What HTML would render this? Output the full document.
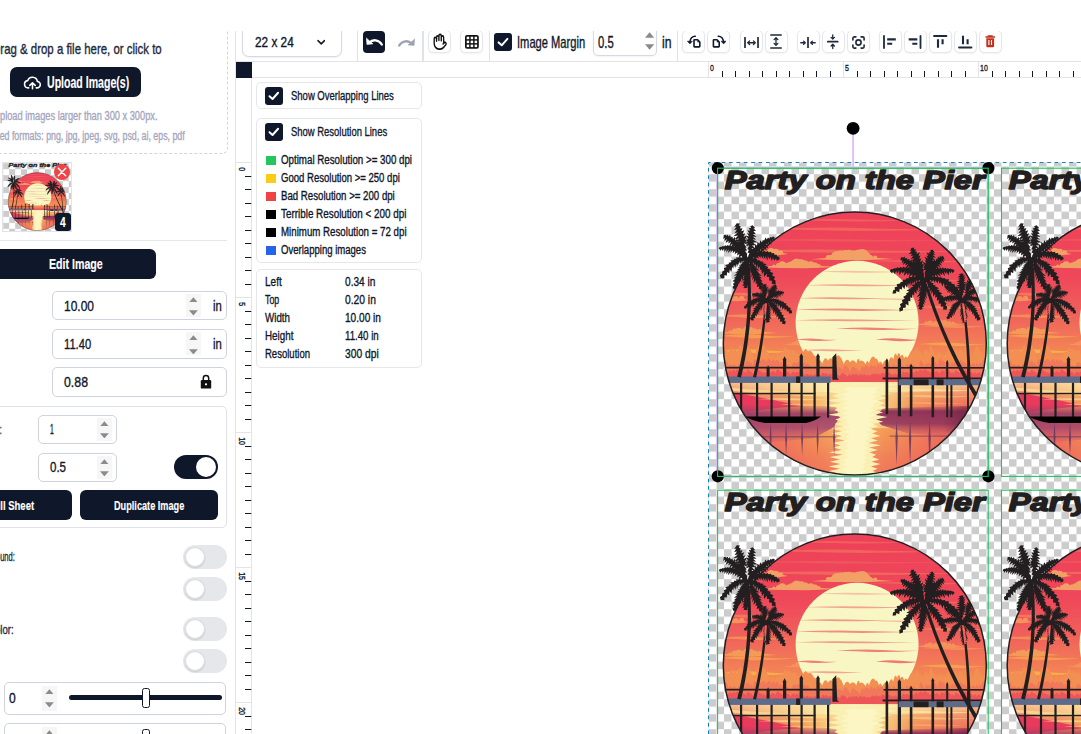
<!DOCTYPE html>
<html lang="en"><head><meta charset="utf-8"><title>Gang Sheet Builder</title><style>
html,body{margin:0;padding:0}
body{width:1081px;height:734px;overflow:hidden;position:relative;background:#fff;font-family:"Liberation Sans",sans-serif}
#app{position:absolute;left:0;top:0;width:1081px;height:734px;overflow:hidden}
#app div,#app svg,#app span{position:absolute}
.t{white-space:pre;line-height:1;display:block;-webkit-text-stroke:0.35px currentColor}
.b{-webkit-text-stroke:0.15px currentColor}
</style></head>
<body><div id="app">
<svg style="left:0;top:0" width="1081" height="734" viewBox="0 0 1081 734"><defs><pattern id="chk" x="709" y="159.2" width="15" height="15" patternUnits="userSpaceOnUse"><rect width="15" height="15" fill="#fff"/><rect width="7.5" height="7.5" fill="#ccc"/><rect x="7.5" y="7.5" width="7.5" height="7.5" fill="#ccc"/></pattern><pattern id="chk2" x="-17" y="2" width="54" height="54" patternUnits="userSpaceOnUse"><rect width="54" height="54" fill="#fff"/><rect width="27" height="27" fill="#ccc"/><rect x="27" y="27" width="27" height="27" fill="#ccc"/></pattern><g id="art"><defs><clipPath id="cc"><circle cx="137.2" cy="175.4" r="131.6"/></clipPath><clipPath id="sunc"><circle cx="139.5" cy="154" r="61.5"/></clipPath><linearGradient id="sky" x1="0" y1="0" x2="0" y2="1"><stop offset="0" stop-color="#ee4059"/><stop offset="0.40" stop-color="#ef485a"/><stop offset="0.62" stop-color="#f0645b"/><stop offset="0.82" stop-color="#f38654"/><stop offset="1" stop-color="#f6a24c"/></linearGradient><linearGradient id="wh" x1="0" y1="0" x2="1" y2="0"><stop offset="0.04" stop-color="#ea4a5c"/><stop offset="0.22" stop-color="#f0785a"/><stop offset="0.38" stop-color="#f6a453"/><stop offset="0.5" stop-color="#f9c877"/><stop offset="0.62" stop-color="#f6a453"/><stop offset="0.78" stop-color="#f07a5a"/><stop offset="0.96" stop-color="#e9585c"/></linearGradient><linearGradient id="wv" x1="0" y1="0" x2="0" y2="1"><stop offset="0" stop-color="#fbe39a" stop-opacity=".75"/><stop offset="0.22" stop-color="#f7b060" stop-opacity=".25"/><stop offset="0.45" stop-color="#ee685c" stop-opacity=".12"/><stop offset="0.75" stop-color="#ec5e5c" stop-opacity=".5"/><stop offset="1" stop-color="#ea505c" stop-opacity=".6"/></linearGradient><linearGradient id="glow" x1="0" y1="0" x2="1" y2="0"><stop offset="0" stop-color="#fbeeb0" stop-opacity="0"/><stop offset="0.3" stop-color="#fbeeb0" stop-opacity=".55"/><stop offset="0.5" stop-color="#fbf3bb"/><stop offset="0.7" stop-color="#fbeeb0" stop-opacity=".55"/><stop offset="1" stop-color="#fbeeb0" stop-opacity="0"/></linearGradient><linearGradient id="purp" x1="0" y1="0" x2="0" y2="1"><stop offset="0" stop-color="#a04468" stop-opacity=".0"/><stop offset="0.22" stop-color="#9a3f66" stop-opacity=".95"/><stop offset="0.55" stop-color="#a8486c" stop-opacity=".9"/><stop offset="1" stop-color="#d05868" stop-opacity="0"/></linearGradient><linearGradient id="purpR" x1="0" y1="0" x2="0" y2="1"><stop offset="0" stop-color="#8a3058" stop-opacity="0"/><stop offset="0.18" stop-color="#8a3058" stop-opacity=".95"/><stop offset="0.55" stop-color="#94365c" stop-opacity=".9"/><stop offset="1" stop-color="#d05866" stop-opacity="0"/></linearGradient><linearGradient id="darkR" x1="0" y1="0" x2="1" y2="0"><stop offset="0.5" stop-color="#5a1838" stop-opacity="0"/><stop offset="1" stop-color="#5a1838" stop-opacity=".85"/></linearGradient></defs><g clip-path="url(#cc)"><rect x="0" y="40" width="270" height="176" fill="url(#sky)"/><path fill="#f0605b" d="M70.0 52.0Q109.0 50.2 141.5 51.3T200.0 52.0Q148.0 53.8 115.5 52.9T70.0 52.0Z"/><path fill="#f0645b" d="M45.0 61.0Q102.0 58.4 149.5 60.0T235.0 61.0Q159.0 63.6 111.5 62.3T45.0 61.0Z"/><path fill="#ef585b" d="M25.0 72.0Q89.5 70.0 143.2 71.2T240.0 72.0Q154.0 74.0 100.2 73.0T25.0 72.0Z"/><path fill="#f0685c" d="M12.0 83.0Q87.0 80.4 149.5 82.0T262.0 83.0Q162.0 85.6 99.5 84.3T12.0 83.0Z"/><path fill="#f0625c" d="M150.0 93.0Q183.0 91.2 210.5 92.3T260.0 93.0Q216.0 94.8 188.5 93.9T150.0 93.0Z"/><path fill="#f0685c" d="M2.0 104.0Q17.0 102.0 29.5 103.2T52.0 104.0Q32.0 106.0 19.5 105.0T2.0 104.0Z"/><path fill="#f0665a" d="M170.0 112.0Q198.5 109.8 222.2 111.1T265.0 112.0Q227.0 114.2 203.2 113.1T170.0 112.0Z"/><path fill="#f2785a" d="M2.0 126.0Q21.2 123.6 37.2 125.0T66.0 126.0Q40.4 128.4 24.4 127.2T2.0 126.0Z"/><path fill="#f3805a" d="M200.0 139.0Q221.0 136.5 238.5 138.0T270.0 139.0Q242.0 141.5 224.5 140.2T200.0 139.0Z"/><path fill="#f58e56" d="M0.0 148.0Q22.2 145.4 40.7 147.0T74.0 148.0Q44.4 150.6 25.9 149.3T0.0 148.0Z"/><path fill="#f58e56" d="M203.0 158.0Q223.1 155.4 239.8 157.0T270.0 158.0Q243.2 160.6 226.4 159.3T203.0 158.0Z"/><path fill="#f69c50" d="M0.0 168.0Q23.4 165.0 42.9 166.8T78.0 168.0Q46.8 171.0 27.3 169.5T0.0 168.0Z"/><path fill="#f6a050" d="M200.0 176.0Q221.0 173.2 238.5 174.9T270.0 176.0Q242.0 178.8 224.5 177.4T200.0 176.0Z"/><path fill="#f8ad4c" d="M0.0 183.0Q24.0 180.0 44.0 181.8T80.0 183.0Q48.0 186.0 28.0 184.5T0.0 183.0Z"/><path fill="#f7a24e" d="M197.0 189.0Q219.5 186.0 238.2 187.8T272.0 189.0Q242.0 192.0 223.2 190.5T197.0 189.0Z"/><clipPath id="cl1"><rect x="39.8" y="71.1" width="34.2" height="15.2"/></clipPath><g fill="#f3a066"><g clip-path="url(#cl1)"><circle cx="49.8" cy="84.7" r="1.9"/><circle cx="53.4" cy="83.7" r="3.9"/><circle cx="58.2" cy="84.0" r="3.4"/><circle cx="63.2" cy="84.4" r="2.4"/></g><path d="M42.0 86.1L48.8 84.3L63.2 84.3L70.4 85.9L59.6 87.1L51.5 86.8Z"/></g><clipPath id="cl2"><rect x="87.2" y="64.9" width="98.8" height="26.4"/></clipPath><g fill="#f3a066"><g clip-path="url(#cl2)"><circle cx="110.8" cy="89.3" r="2.6"/><circle cx="113.9" cy="89.3" r="2.7"/><circle cx="119.2" cy="88.1" r="5.4"/><circle cx="122.9" cy="87.9" r="5.7"/><circle cx="127.7" cy="87.8" r="6.0"/><circle cx="131.3" cy="87.7" r="6.1"/><circle cx="136.0" cy="88.0" r="5.6"/><circle cx="141.2" cy="87.6" r="6.4"/><circle cx="144.9" cy="87.5" r="6.6"/><circle cx="148.8" cy="88.5" r="4.4"/><circle cx="152.8" cy="89.3" r="2.6"/><circle cx="157.6" cy="89.5" r="2.1"/></g><path d="M93.4 91.1L113.2 89.3L154.8 89.3L175.6 90.9L144.4 92.1L121.0 91.8Z"/></g><clipPath id="cl3"><rect x="34.0" y="80.1" width="95.0" height="19.2"/></clipPath><g fill="#f3a066"><g clip-path="url(#cl3)"><circle cx="56.3" cy="97.8" r="1.6"/><circle cx="61.0" cy="97.3" r="2.6"/><circle cx="64.7" cy="96.8" r="3.8"/><circle cx="70.4" cy="97.2" r="2.9"/><circle cx="74.1" cy="96.8" r="3.7"/><circle cx="79.0" cy="96.0" r="5.6"/><circle cx="83.5" cy="96.2" r="5.1"/><circle cx="87.6" cy="96.5" r="4.3"/><circle cx="93.2" cy="96.8" r="3.8"/><circle cx="97.5" cy="97.2" r="2.9"/><circle cx="101.1" cy="97.6" r="1.9"/></g><path d="M40.0 99.1L59.0 97.3L99.0 97.3L119.0 98.9L89.0 100.1L66.5 99.8Z"/></g><clipPath id="cl4"><rect x="-2.0" y="117.1" width="38.0" height="15.2"/></clipPath><g fill="#f4935c"><g clip-path="url(#cl4)"><circle cx="7.9" cy="130.6" r="2.0"/><circle cx="13.0" cy="130.0" r="3.2"/><circle cx="18.4" cy="130.3" r="2.6"/><circle cx="24.0" cy="130.3" r="2.7"/></g><path d="M0.4 132.1L8.0 130.3L24.0 130.3L32.0 131.9L20.0 133.1L11.0 132.8Z"/></g><clipPath id="cl5"><rect x="-5.2" y="150.9" width="72.2" height="14.4"/></clipPath><g fill="#f59b5a"><g clip-path="url(#cl5)"><circle cx="12.5" cy="163.8" r="1.7"/><circle cx="17.0" cy="163.2" r="2.8"/><circle cx="21.2" cy="163.0" r="3.4"/><circle cx="24.7" cy="163.4" r="2.5"/><circle cx="29.2" cy="162.6" r="4.2"/><circle cx="32.6" cy="162.7" r="4.0"/><circle cx="37.1" cy="163.2" r="2.9"/><circle cx="41.8" cy="163.4" r="2.5"/><circle cx="45.5" cy="163.9" r="1.3"/></g><path d="M-0.6 165.1L13.8 163.3L44.2 163.3L59.4 164.9L36.6 166.1L19.5 165.8Z"/></g><clipPath id="cl6"><rect x="193.2" y="143.2" width="60.8" height="13.6"/></clipPath><g fill="#f4935c"><g clip-path="url(#cl6)"><circle cx="208.8" cy="155.2" r="1.9"/><circle cx="212.5" cy="154.8" r="2.6"/><circle cx="217.7" cy="155.0" r="2.3"/><circle cx="222.4" cy="154.6" r="3.2"/><circle cx="227.0" cy="154.7" r="2.9"/><circle cx="231.6" cy="155.0" r="2.3"/><circle cx="235.6" cy="155.2" r="1.8"/></g><path d="M197.0 156.6L209.2 154.8L234.8 154.8L247.6 156.4L228.4 157.6L214.0 157.3Z"/></g><clipPath id="cl7"><rect x="62.0" y="164.0" width="57.0" height="12.8"/></clipPath><g fill="#f4935c"><g clip-path="url(#cl7)"><circle cx="75.6" cy="175.3" r="1.5"/><circle cx="79.8" cy="174.8" r="2.7"/><circle cx="84.5" cy="174.7" r="3.0"/><circle cx="89.0" cy="174.9" r="2.3"/><circle cx="93.2" cy="175.0" r="2.2"/><circle cx="97.0" cy="175.1" r="1.9"/><circle cx="102.3" cy="175.3" r="1.6"/></g><path d="M65.6 176.6L77.0 174.8L101.0 174.8L113.0 176.4L95.0 177.6L81.5 177.3Z"/></g><circle cx="139.5" cy="154" r="61.5" fill="#f8f7c3"/><g clip-path="url(#sunc)"><path fill="#f6c3a4" d="M100.0 103.5Q125.5 102.1 146.8 102.9T185.0 103.5Q151.0 104.9 129.8 104.2T100.0 103.5Z"/><path fill="#f3a592" d="M86.0 117.0Q119.6 115.4 147.6 116.4T198.0 117.0Q153.2 118.6 125.2 117.8T86.0 117.0Z"/><path fill="#f29a8a" d="M80.0 130.0Q108.5 128.4 132.2 129.4T175.0 130.0Q137.0 131.6 113.2 130.8T80.0 130.0Z"/><path fill="#f5b9a0" d="M160.0 131.0Q174.4 129.8 186.4 130.5T208.0 131.0Q188.8 132.2 176.8 131.6T160.0 131.0Z"/><path fill="#f18e84" d="M77.0 141.5Q114.8 139.7 146.3 140.8T203.0 141.5Q152.6 143.3 121.1 142.4T77.0 141.5Z"/><path fill="#f29a8a" d="M77.0 152.0Q113.6 150.5 144.1 151.4T199.0 152.0Q150.2 153.5 119.7 152.8T77.0 152.0Z"/><path fill="#f0807a" d="M118.0 160.5Q143.8 158.5 165.3 159.7T204.0 160.5Q169.6 162.5 148.1 161.5T118.0 160.5Z"/><path fill="#f0807a" d="M78.0 171.5Q90.6 169.5 101.1 170.7T120.0 171.5Q103.2 173.5 92.7 172.5T78.0 171.5Z"/><path fill="#ef7876" d="M158.0 171.5Q171.8 169.3 183.3 170.6T204.0 171.5Q185.6 173.7 174.1 172.6T158.0 171.5Z"/><path fill="#f3a592" d="M84.0 182.0Q102.6 180.5 118.1 181.4T146.0 182.0Q121.2 183.5 105.7 182.8T84.0 182.0Z"/></g><path fill="#f38f52" d="M0 214.5L0 183.3Q2.3 176.1 4.7 183.5Q7.8 177.5 11.0 184.8Q13.4 175.6 15.9 183.1Q17.7 176.8 19.6 184.2Q22.3 172.4 24.9 180.4Q26.6 180.1 28.3 187.0Q30.0 172.2 31.7 180.2Q34.5 184.1 37.2 190.5Q40.5 169.7 43.8 178.1Q46.5 175.2 49.2 182.8Q51.0 184.6 52.8 190.8Q55.3 184.2 57.7 190.5Q59.6 182.0 61.5 188.6Q63.1 179.2 64.7 186.2Q67.0 174.3 69.3 182.0Q71.7 178.0 74.2 185.2Q76.6 178.5 79.0 185.6Q81.4 184.5 83.7 190.8Q87.0 175.8 90.3 183.3Q93.3 180.6 96.4 187.4Q98.5 187.4 100.5 193.3Q102.6 189.9 104.6 195.4Q107.5 186.5 110.4 192.5Q113.5 187.4 116.5 193.2Q119.7 183.0 122.9 189.4Q124.5 190.6 126.0 196.0Q129.2 188.2 132.3 194.0Q135.6 189.6 138.8 195.2Q140.5 187.2 142.2 193.1Q145.1 190.6 148.0 196.0Q149.7 189.4 151.4 195.0Q154.6 184.2 157.8 190.5Q159.6 189.3 161.3 194.9Q163.1 191.1 164.8 196.4Q167.7 189.2 170.7 194.8Q173.2 185.3 175.7 191.4Q177.6 181.1 179.5 187.9Q181.2 181.7 183.0 188.3Q184.8 184.0 186.5 190.3Q188.4 185.5 190.3 191.6Q193.6 177.6 196.8 184.8Q198.9 175.5 201.0 183.0Q202.9 181.7 204.8 188.4Q207.8 177.4 210.9 184.7Q212.6 171.4 214.3 179.5Q216.2 181.8 218.1 188.4Q221.0 180.0 223.9 186.9Q226.0 183.7 228.1 190.0Q229.8 175.7 231.5 183.2Q233.4 175.4 235.4 183.0Q237.6 177.7 239.8 184.9Q243.0 177.3 246.2 184.5Q248.8 171.3 251.3 179.4Q253.2 182.4 255.1 189.0Q258.2 172.0 261.4 180.1Q263.3 181.8 265.3 188.5Q267.7 170.1 270.0 178.4L270 214.5Z"/><path fill="#f1785a" d="M0 214.5L0 195.3Q1.7 188.7 3.4 194.4Q5.8 187.1 8.2 193.0Q9.8 193.1 11.4 198.1Q13.0 193.1 14.5 198.2Q17.0 194.0 19.4 199.0Q21.5 193.2 23.7 198.3Q25.5 191.2 27.2 196.5Q29.8 189.5 32.4 195.0Q33.8 192.7 35.2 197.8Q36.7 186.9 38.3 192.9Q40.8 187.6 43.4 193.4Q46.0 188.2 48.6 193.9Q51.3 188.0 54.1 193.8Q55.8 187.9 57.5 193.7Q59.6 189.1 61.7 194.7Q63.9 192.4 66.1 197.6Q67.9 192.7 69.8 197.8Q71.6 195.7 73.4 200.4Q76.0 190.2 78.6 195.6Q81.4 191.6 84.2 196.8Q86.4 191.5 88.6 196.8Q90.1 192.4 91.7 197.6Q93.7 196.7 95.7 201.3Q97.3 194.3 98.9 199.2Q100.7 195.0 102.4 199.8Q104.6 195.8 106.9 200.5Q108.4 195.4 109.9 200.1Q111.6 197.5 113.3 202.0Q114.9 196.8 116.6 201.4Q118.0 195.0 119.4 199.8Q122.2 197.2 125.0 201.7Q127.4 193.9 129.8 198.9Q131.2 199.5 132.6 203.7Q135.2 195.3 137.7 200.0Q140.0 199.7 142.3 203.9Q144.3 194.8 146.3 199.6Q148.9 194.8 151.6 199.6Q153.3 194.0 154.9 199.0Q156.8 194.7 158.7 199.5Q160.2 192.5 161.8 197.7Q164.0 194.0 166.3 198.9Q167.9 194.4 169.6 199.3Q171.8 194.3 174.0 199.2Q175.9 192.9 177.7 198.0Q179.6 196.0 181.4 200.6Q183.0 192.6 184.6 197.8Q186.1 196.1 187.6 200.7Q189.0 192.4 190.5 197.6Q192.7 193.0 194.8 198.0Q196.2 193.6 197.6 198.6Q199.5 196.3 201.3 200.9Q202.6 188.2 204.0 193.9Q205.5 194.0 207.0 199.0Q208.7 191.2 210.5 196.5Q211.9 192.1 213.4 197.3Q215.3 188.5 217.2 194.2Q218.5 192.8 219.8 197.9Q221.9 186.6 224.0 192.6Q226.1 190.9 228.2 196.3Q230.6 192.5 232.9 197.6Q234.3 190.5 235.7 195.9Q238.4 188.2 241.1 194.0Q242.8 188.7 244.6 194.4Q247.2 192.8 249.8 197.9Q252.0 191.9 254.2 197.1Q255.9 192.5 257.6 197.7Q259.3 191.9 260.9 197.2Q262.3 191.5 263.7 196.8Q265.2 188.0 266.6 193.8Q268.3 195.3 270.0 200.0L270 214.5Z"/><path fill="#ee5559" d="M0 214.5L0 204.1Q1.3 199.3 2.7 203.5Q4.7 198.1 6.8 202.5Q8.4 201.7 9.9 205.5Q12.1 199.6 14.3 203.7Q15.9 199.4 17.5 203.6Q19.3 199.0 21.0 203.2Q22.3 201.8 23.7 205.7Q26.1 201.1 28.5 205.1Q30.1 198.8 31.6 203.1Q33.7 202.2 35.7 206.0Q37.6 199.5 39.6 203.7Q41.0 199.6 42.4 203.8Q43.8 201.2 45.1 205.2Q46.4 201.9 47.7 205.8Q50.3 200.9 52.8 204.9Q55.3 200.7 57.8 204.7Q59.9 198.5 61.9 202.8Q64.0 202.5 66.1 206.3Q68.1 200.1 70.1 204.2Q71.5 203.0 73.0 206.6Q75.4 201.1 77.7 205.0Q79.2 201.6 80.6 205.5Q82.1 200.2 83.6 204.2Q85.5 203.6 87.4 207.2Q89.7 203.8 92.0 207.4Q93.5 204.3 95.1 207.8Q97.3 204.1 99.5 207.6Q101.4 204.4 103.3 207.9Q105.2 202.1 107.0 205.9Q108.9 203.3 110.8 206.9Q112.7 203.6 114.5 207.2Q116.5 205.1 118.5 208.5Q120.4 204.8 122.2 208.2Q124.6 202.4 126.9 206.2Q128.2 205.5 129.5 208.8Q131.6 204.2 133.8 207.7Q135.0 203.6 136.2 207.2Q138.7 204.3 141.2 207.8Q142.8 203.6 144.5 207.2Q147.0 204.5 149.4 207.9Q151.0 204.6 152.6 208.0Q154.7 203.3 156.7 206.9Q158.3 203.4 159.8 207.0Q161.0 203.5 162.3 207.1Q164.8 202.2 167.3 206.0Q168.9 200.4 170.5 204.5Q172.2 203.2 173.8 206.9Q175.1 203.6 176.3 207.1Q177.8 203.0 179.2 206.7Q181.6 202.7 184.0 206.4Q185.5 200.9 187.0 204.8Q189.5 202.1 191.9 205.9Q194.1 201.5 196.4 205.4Q198.3 200.1 200.3 204.2Q202.7 199.1 205.2 203.3Q207.1 198.6 209.0 202.9Q210.7 201.0 212.4 205.0Q214.9 200.2 217.3 204.2Q219.6 201.4 221.8 205.3Q224.3 199.8 226.7 203.9Q228.2 198.1 229.8 202.5Q231.6 201.2 233.4 205.2Q235.0 202.5 236.5 206.2Q238.0 199.4 239.4 203.6Q240.8 201.7 242.2 205.5Q244.0 200.2 245.8 204.2Q247.5 198.9 249.2 203.2Q250.7 201.1 252.3 205.0Q254.0 202.3 255.8 206.1Q257.3 202.2 258.8 206.0Q261.0 202.2 263.2 206.0Q265.3 201.8 267.4 205.7Q268.7 199.6 270.0 203.7L270 214.5Z"/><rect x="0" y="214" width="270" height="100" fill="url(#wh)"/><rect x="0" y="214" width="270" height="100" fill="url(#wv)"/><path fill="url(#glow)" d="M6 214 H268 V219 Q200 225 170 224 L110 224 Q60 224 6 220Z"/><rect x="84" y="214" width="112" height="46" fill="url(#glow)" opacity=".9"/><path fill="#e8345c" opacity=".92" d="M0 222 Q30 226 84 238 Q40 240 0 250Z"/><path fill="#f9dc90" opacity=".85" d="M8 219 Q60 224 112 224 L112 228 Q60 228 12 222Z"/><path fill="#f9d68c" opacity="0.85" d="M40.0 231.0Q62.2 229.4 80.7 230.4T114.0 231.0Q84.4 232.6 65.9 231.8T40.0 231.0Z"/><path fill="#f8c880" opacity="0.75" d="M62.0 236.5Q78.2 235.1 91.7 235.9T116.0 236.5Q94.4 237.9 80.9 237.2T62.0 236.5Z"/><path fill="#f8c67e" opacity="0.8" d="M176.0 228.0Q201.2 226.0 222.2 227.2T260.0 228.0Q226.4 230.0 205.4 229.0T176.0 228.0Z"/><path fill="#f5b070" opacity="0.7" d="M182.0 235.0Q201.8 233.4 218.3 234.4T248.0 235.0Q221.6 236.6 205.1 235.8T182.0 235.0Z"/><path fill="#fbe7a2" opacity="0.8" d="M172.0 222.0Q199.0 220.2 221.5 221.3T262.0 222.0Q226.0 223.8 203.5 222.9T172.0 222.0Z"/><path fill="url(#purp)" d="M0 236 L118 238 L122 249 L116 259 L96 270 L0 279Z"/><path fill="url(#purpR)" d="M270 237 L166 240 L156 249 L164 257 L190 265 L270 271Z"/><rect x="180" y="238" width="90" height="26" fill="url(#darkR)"/><path fill="#fbf0b4" d="M122.9 216.0L106.1 218.3L123.0 220.7L105.4 223.1L121.6 225.4L114.4 227.8L121.7 230.1L107.8 232.4L124.2 234.8L107.1 237.2L121.1 239.5L116.5 241.8L123.7 244.2L109.9 246.6L125.8 248.9L117.5 251.2L124.8 253.6L116.7 255.9L126.5 258.3L114.1 260.6L124.4 263.0L114.1 265.4L124.6 267.7L117.0 270.1L127.0 272.4L114.7 274.8L123.0 277.1L116.4 279.4L124.1 281.8L111.2 284.1L125.2 286.5L112.0 288.9L122.3 291.2L112.2 293.6L122.8 295.9L111.0 298.2L122.3 300.6L111.6 302.9L120.7 305.3L110.9 307.6L121.3 310.0L165.8 310.0L150.8 307.6L163.6 305.3L154.8 302.9L159.9 300.6L153.2 298.2L162.9 295.9L153.7 293.6L161.7 291.2L154.6 288.9L158.5 286.5L151.8 284.1L160.2 281.8L151.7 279.4L163.2 277.1L150.9 274.8L160.1 272.4L153.2 270.1L162.6 267.7L154.6 265.4L159.9 263.0L152.8 260.6L160.3 258.3L155.1 255.9L165.7 253.6L158.4 251.2L169.6 248.9L156.9 246.6L165.5 244.2L157.8 241.8L171.5 239.5L161.3 237.2L168.0 234.8L159.6 232.4L169.7 230.1L161.6 227.8L172.9 225.4L163.6 223.1L180.3 220.7L164.6 218.3L181.0 216.0Z"/><path fill="#fbf6c4" d="M129.9 219.0L127.0 221.3L132.8 223.7L123.6 226.0L130.3 228.4L122.2 230.7L131.3 233.1L124.0 235.4L131.0 237.7L123.4 240.1L132.3 242.4L123.9 244.8L130.4 247.1L123.8 249.4L131.2 251.8L127.2 254.1L132.3 256.5L124.6 258.8L132.7 261.2L126.1 263.5L132.8 265.8L128.6 268.2L131.6 270.5L127.2 272.9L130.6 275.2L127.4 277.6L131.7 279.9L126.3 282.2L130.3 284.6L127.3 286.9L130.5 289.3L125.6 291.6L128.6 293.9L125.0 296.3L128.1 298.6L123.8 301.0L128.9 303.3L124.5 305.7L127.9 308.0L150.2 308.0L143.1 305.7L148.7 303.3L144.1 301.0L148.2 298.6L143.9 296.3L149.7 293.9L146.1 291.6L149.6 289.3L146.5 286.9L150.2 284.6L145.5 282.2L150.6 279.9L146.2 277.6L150.3 275.2L147.1 272.9L151.9 270.5L148.5 268.2L152.9 265.8L147.4 263.5L155.1 261.2L149.5 258.8L156.2 256.5L151.2 254.1L156.6 251.8L151.0 249.4L158.5 247.1L151.9 244.8L156.8 242.4L152.8 240.1L157.1 237.7L154.8 235.4L162.9 233.1L153.6 230.7L160.2 228.4L154.6 226.0L160.7 223.7L157.8 221.3L161.8 219.0Z"/><path fill="#5d3560" opacity=".8" d="M51.9 268.5 L54.1 268.5 L53 287Z"/><path fill="#5d3560" opacity=".8" d="M52.1 268.5 L53.9 268.5 L53 254Z"/><path fill="#5d3560" opacity=".8" d="M67.4 268.5 L69.6 268.5 L68.5 287Z"/><path fill="#5d3560" opacity=".8" d="M67.6 268.5 L69.4 268.5 L68.5 254Z"/><path fill="#5d3560" opacity=".8" d="M83.4 268.5 L85.6 268.5 L84.5 287Z"/><path fill="#5d3560" opacity=".8" d="M83.6 268.5 L85.4 268.5 L84.5 254Z"/><path fill="#5d3560" opacity=".8" d="M98.9 268.5 L101.1 268.5 L100 287Z"/><path fill="#5d3560" opacity=".8" d="M99.1 268.5 L100.9 268.5 L100 254Z"/><path fill="#5d3560" opacity=".8" d="M115.4 268.5 L117.6 268.5 L116.5 287Z"/><path fill="#5d3560" opacity=".8" d="M115.6 268.5 L117.4 268.5 L116.5 254Z"/><path fill="#5a3060" opacity=".8" d="M177.8 268 L180.2 268 L179 297Z"/><path fill="#5a3060" opacity=".8" d="M178.0 268 L180.0 268 L179 252Z"/><path fill="#5a3060" opacity=".8" d="M191.3 268 L193.7 268 L192.5 297Z"/><path fill="#5a3060" opacity=".8" d="M191.5 268 L193.5 268 L192.5 252Z"/><path fill="#5a3060" opacity=".8" d="M210.8 268 L213.2 268 L212 297Z"/><path fill="#5a3060" opacity=".8" d="M211.0 268 L213.0 268 L212 252Z"/><rect x="44" y="267.8" width="74" height="1.5" fill="#5d3560" opacity=".5"/><rect x="172" y="267.2" width="62" height="1.5" fill="#5a3060" opacity=".45"/><g fill="#231f20"><rect x="0" y="198.6" width="118.5" height="1.7"/><path d="M49.0 209 L49.0 200 L50.5 197 L52.0 200 L52.0 209Z"/><path d="M65.4 209 L65.4 191 L67 188 L68.6 191 L68.6 209Z"/><path d="M82.10000000000001 209 L82.10000000000001 188 L83.7 185 L85.3 188 L85.3 209Z"/><path d="M98.80000000000001 209 L98.80000000000001 188 L100.4 185 L102.0 188 L102.0 209Z"/><path d="M114.8 189 L118.6 185 L119.6 210 L121.6 211.6 L114.8 211.6Z"/><rect x="22.4" y="214" width="2.2" height="35.5"/><rect x="38.4" y="214" width="2.2" height="35.5"/><rect x="52.9" y="214" width="2.2" height="35.5"/><rect x="70.4" y="214" width="2.2" height="35.5"/><rect x="82.9" y="214" width="2.2" height="35.5"/><rect x="95.9" y="214" width="2.2" height="35.5"/><rect x="109.4" y="214" width="2.2" height="35.5"/><rect x="12" y="224.6" width="86" height="1.5"/><path d="M27 248.3 L103.5 248.3 Q97 253 88 254.8 L48 254.8 Q36 253 27 248.3Z" fill="#000"/></g><rect x="8" y="208.3" width="105" height="6.4" fill="#5c6b8a"/><rect x="78.5" y="208.3" width="4.2" height="6.4" fill="#231f20"/><g fill="#231f20"><rect x="166" y="198.8" width="104" height="1.6"/><rect x="165" y="209.3" width="105" height="1.9"/><path d="M168.0 246 L168.0 192.5 L169.3 190 L170.60000000000002 192.5 L170.60000000000002 246Z"/><path d="M180.20000000000002 248 L180.20000000000002 191.5 L181.8 189 L183.4 191.5 L183.4 248Z"/><path d="M192.2 248 L192.2 198.0 L193.5 195.5 L194.8 198.0 L194.8 248Z"/><path d="M213.89999999999998 249 L213.89999999999998 190.0 L215.2 187.5 L216.5 190.0 L216.5 249Z"/><path d="M228.6 249 L228.6 194.0 L229.6 191.5 L230.6 194.0 L230.6 249Z"/><path d="M232.8 249 L232.8 212.5 L233.8 210 L234.8 212.5 L234.8 249Z"/><path d="M249.5 247 L249.5 200.5 L250.4 198 L251.3 200.5 L251.3 247Z"/></g><rect x="181" y="211.2" width="89" height="5.8" fill="#5c6b8a"/><rect x="196" y="211.2" width="15" height="5.8" fill="#231f20"/><rect x="219" y="211.2" width="7" height="5.8" fill="#231f20"/><g fill="#231f20"><path d="M207.0 111.6L207.1 108.2L208.0 106.1L206.8 105.0L208.1 101.7L205.6 102.1L206.7 99.2L205.2 99.0L206.7 94.8L204.2 96.2L205.7 91.8L202.6 93.7L203.7 90.2L201.7 90.9L202.9 87.1L200.9 88.2L202.1 83.8L198.8 86.1L199.6 83.4L197.7 83.6L198.3 81.0L196.1 81.4L196.6 79.5L194.0 79.6L192.3 82.9L194.2 82.4L191.1 86.0L194.5 85.2L193.0 88.1L195.9 87.4L192.9 90.9L196.5 90.1L193.3 93.6L197.4 92.8L193.8 96.2L198.3 95.4L196.3 98.5L199.8 97.9L197.3 101.2L200.9 100.6L199.0 103.8L202.2 103.4L200.2 106.6L203.2 106.2L202.7 109.2L204.8 109.0ZM207.0 111.6L205.2 108.1L204.7 105.6L202.4 106.0L201.6 103.8L199.7 103.8L198.5 101.2L196.8 102.0L195.2 99.3L193.7 101.1L192.3 99.3L190.7 100.0L188.8 98.0L187.6 99.7L185.9 98.4L184.5 99.7L183.1 98.8L181.3 99.7L179.9 99.0L178.2 100.3L177.0 99.9L175.0 101.1L174.0 100.8L172.0 102.6L174.5 105.2L175.5 102.9L177.0 105.8L178.6 102.8L179.8 105.2L181.5 102.4L181.6 107.0L184.3 103.2L184.9 105.5L187.1 102.8L186.3 107.8L189.6 104.2L189.5 107.3L192.4 104.5L191.1 109.2L194.8 106.1L194.5 109.3L197.7 107.0L198.2 109.9L200.6 108.3L201.2 111.5L203.4 110.2ZM207.0 111.6L204.8 109.8L203.9 108.7L202.3 109.1L201.1 108.1L199.6 108.8L198.2 108.0L196.9 108.6L194.8 107.8L194.1 109.0L191.4 108.5L191.3 110.1L188.8 110.0L188.3 111.3L185.2 111.5L185.6 113.3L183.0 113.8L182.5 115.3L179.0 116.1L179.8 118.2L177.1 119.1L177.2 121.5L175.4 122.3L175.0 125.6L178.5 125.0L178.7 122.9L181.6 124.0L182.1 120.5L184.2 121.4L184.8 118.0L186.8 121.0L187.9 116.5L189.1 119.6L190.4 114.9L191.3 117.5L192.8 113.4L193.0 118.2L195.3 113.2L194.9 117.1L197.4 112.6L197.2 115.4L199.5 112.0L199.7 114.1L201.8 111.7L202.6 113.3L204.1 111.7ZM207.0 111.6L204.6 111.6L202.6 111.7L202.5 112.8L200.2 113.1L200.1 113.9L196.6 114.8L197.8 115.7L193.9 117.0L195.9 118.2L192.8 119.5L193.2 120.3L188.8 122.4L191.6 123.6L188.4 125.3L189.1 126.6L185.5 128.8L187.2 130.4L184.2 132.2L185.1 134.2L182.3 136.1L183.3 138.7L181.6 139.9L182.0 143.6L185.5 142.1L185.3 139.7L188.2 139.4L188.1 135.9L190.9 137.2L190.8 132.5L192.8 133.3L192.7 129.0L194.7 130.0L194.8 125.9L196.6 127.3L196.8 123.1L198.8 126.0L199.2 121.0L200.4 123.3L200.9 118.8L202.0 121.0L202.7 116.9L203.6 119.9L204.5 115.6L205.0 117.3L206.0 114.1ZM207.0 111.6L205.2 113.3L203.4 115.8L204.9 115.4L203.1 117.9L203.8 117.5L201.2 121.1L203.1 119.7L200.0 124.0L203.3 122.1L200.9 125.6L202.3 124.5L199.0 129.1L202.9 127.2L200.8 130.2L202.5 129.8L200.2 133.0L202.5 132.6L200.7 135.2L201.9 135.4L199.7 138.5L202.1 138.4L200.7 140.5L203.0 141.6L205.1 140.8L204.4 138.7L206.2 138.8L205.2 135.8L207.1 136.6L205.9 133.0L208.0 134.7L206.6 130.3L208.6 132.3L207.1 127.7L209.7 130.8L207.9 125.2L210.0 128.3L208.2 122.8L210.0 125.6L208.4 120.4L209.1 121.8L208.0 118.1L208.9 119.0L208.0 115.9L209.3 117.0L208.3 113.8ZM207.0 111.6L207.4 108.4L207.0 106.2L208.6 105.6L208.2 102.8L209.9 103.0L209.5 99.6L211.3 100.6L211.1 96.8L212.9 98.5L212.9 94.8L214.3 96.3L214.5 92.1L216.1 94.4L216.4 90.5L218.2 93.1L218.6 90.2L219.8 91.3L220.4 88.1L221.7 90.0L222.4 87.3L223.7 89.0L224.3 87.4L226.0 88.6L227.1 92.2L225.1 90.9L226.6 94.3L223.8 92.6L224.7 95.3L222.1 93.9L224.3 97.5L220.9 95.8L223.2 99.3L219.5 97.5L222.0 101.1L218.0 99.3L221.3 103.3L216.8 101.4L219.2 104.8L215.1 103.3L216.1 106.2L213.1 105.1L215.3 108.7L211.8 107.6L211.9 110.3L209.7 109.6ZM207.0 111.6L208.4 108.4L208.9 106.0L210.8 106.4L211.5 104.0L213.2 104.6L214.2 102.2L215.7 103.1L217.0 100.7L218.2 101.9L219.8 99.7L220.9 101.0L222.7 99.0L223.5 100.5L225.3 99.0L226.3 100.5L227.7 99.5L228.9 100.7L230.0 100.1L231.7 100.7L233.1 100.2L234.4 101.4L235.4 101.1L237.0 102.6L235.0 105.1L234.0 103.1L232.8 105.4L231.4 103.0L231.3 107.3L228.9 103.7L228.5 105.9L226.5 103.3L227.4 108.0L224.3 104.4L224.7 107.4L221.9 104.5L223.3 108.9L219.8 105.8L220.4 108.8L217.4 106.4L217.6 109.3L215.0 107.4L215.0 110.3L212.6 108.8L212.2 111.5L210.2 110.4ZM207.0 111.6L209.5 109.8L210.4 108.7L212.4 109.2L213.5 108.3L215.3 108.8L216.6 108.1L218.3 108.7L220.2 108.0L221.4 109.3L223.4 108.8L224.6 110.0L227.3 109.7L227.9 111.1L231.4 111.1L230.9 113.3L233.5 113.6L234.2 115.5L237.0 116.0L237.3 118.2L239.8 118.9L240.3 121.6L241.8 122.1L243.0 125.6L239.2 124.9L239.0 122.9L235.9 123.4L235.4 120.4L232.9 121.1L232.3 118.0L230.0 120.1L229.0 116.2L227.4 119.2L226.0 114.9L224.9 118.3L223.1 113.8L222.2 115.7L220.6 112.3L220.0 115.6L217.9 112.0L217.5 114.7L215.4 111.7L214.7 113.9L212.8 111.6L212.4 114.4L210.3 112.2ZM207.0 111.6L209.3 111.7L211.6 112.1L211.4 112.7L214.6 113.5L213.2 114.4L216.3 115.4L215.1 116.3L218.2 117.5L217.4 118.0L221.6 120.0L219.0 120.7L222.4 122.5L221.0 123.3L224.8 125.4L222.7 126.4L225.9 128.4L224.9 129.5L228.4 131.8L226.4 133.2L228.9 135.0L227.9 137.2L229.6 138.4L229.0 141.6L225.5 141.3L225.7 138.3L223.2 138.6L223.4 134.9L221.1 135.8L221.2 131.6L219.3 132.5L219.4 128.5L217.6 129.8L217.6 125.7L215.5 128.5L215.3 123.4L213.8 126.3L213.6 121.2L212.3 124.4L211.8 119.2L211.0 121.6L210.5 117.2L209.8 118.7L209.2 115.3L208.4 116.6L207.8 113.9ZM207.0 111.6L206.1 108.5L204.7 106.0L206.7 105.8L205.3 103.2L206.6 103.0L204.6 99.2L207.2 100.4L205.1 96.4L207.5 97.7L205.2 93.2L208.7 95.3L206.9 91.7L209.0 92.7L207.0 88.5L210.3 90.4L208.8 87.2L210.7 87.9L208.9 84.0L212.3 85.8L211.3 83.6L213.4 83.6L212.6 81.9L215.0 81.6L217.4 84.5L215.4 84.2L217.5 86.9L215.0 86.6L218.3 89.5L214.9 89.1L217.2 91.7L214.0 91.5L219.3 94.6L214.4 94.2L218.0 96.9L213.5 96.6L215.6 99.1L212.2 98.9L215.2 101.7L211.6 101.5L214.5 104.2L211.0 104.0L213.5 106.8L210.2 106.6L211.6 109.3L209.1 109.2ZM207.0 111.6L206.3 108.0L206.5 105.5L204.4 105.2L204.5 102.7L203.0 102.3L203.0 98.5L200.9 100.0L200.7 96.4L199.1 97.7L198.5 93.8L197.0 95.6L196.2 91.7L194.6 94.2L193.8 91.1L192.3 92.8L191.4 90.5L190.0 91.6L189.1 89.7L187.9 90.3L186.7 88.3L185.4 89.8L184.7 88.7L183.0 89.6L183.2 92.9L184.7 91.5L184.2 95.0L186.5 93.0L185.0 97.0L188.2 94.6L187.5 97.5L190.4 95.5L188.0 100.0L191.9 97.5L189.2 101.8L193.6 99.4L192.0 102.8L195.8 100.8L194.1 104.4L197.7 102.8L197.2 105.8L200.0 104.6L198.8 108.3L201.8 107.1L201.5 110.4L203.9 109.5ZM205.6 112.0L208.9 122.6L212.3 133.0L215.9 143.3L219.8 153.4L223.8 163.4L228.1 173.3L232.5 183.1L237.2 192.8L242.0 202.3L247.1 211.7L252.4 220.9L257.8 230.0L261.2 228.0L255.7 219.0L250.4 209.8L245.3 200.6L240.4 191.2L235.7 181.6L231.2 172.0L226.9 162.2L222.8 152.2L218.9 142.2L215.2 132.0L211.7 121.6L208.4 111.2Z"/><circle cx="207" cy="112.1" r="2.6"/><path d="M245.0 132.0L246.0 129.6L247.3 128.1L246.6 127.3L248.7 124.8L246.6 124.9L248.9 122.3L246.6 122.6L248.8 120.0L246.6 120.4L248.9 117.6L246.8 118.1L249.5 114.9L246.0 115.9L247.8 113.7L245.9 113.7L247.7 111.5L246.0 111.4L248.1 109.0L245.7 109.3L247.5 107.1L245.0 107.1L246.0 105.9L244.0 105.0L240.7 106.9L242.8 107.2L239.8 109.0L242.5 109.4L240.6 111.2L242.9 111.6L238.7 113.3L242.2 113.8L239.3 115.5L242.5 116.0L238.0 117.7L242.0 118.3L238.3 119.9L242.2 120.5L240.2 122.4L243.0 122.8L239.9 124.6L242.9 125.1L240.9 127.0L243.4 127.4L242.1 129.4L243.8 129.7ZM245.0 132.0L245.0 129.2L244.4 127.5L245.7 126.6L245.0 124.5L246.6 124.2L245.8 121.9L247.4 121.9L246.7 119.3L248.3 119.6L247.5 116.7L248.8 117.2L247.8 113.3L249.9 115.2L249.1 111.5L251.2 113.3L250.6 110.2L252.4 111.4L251.9 108.4L253.9 109.8L253.6 107.8L255.2 108.2L255.1 106.7L257.0 107.0L258.3 109.7L256.8 109.2L258.5 111.9L256.1 111.2L258.2 113.9L255.3 113.1L258.0 116.0L254.6 115.1L256.2 117.6L253.3 116.9L255.6 119.7L252.5 119.0L254.7 121.8L251.5 121.1L252.9 123.6L250.3 123.1L251.9 125.8L249.3 125.3L251.8 128.3L248.6 127.8L248.7 130.1L246.9 129.9ZM245.0 132.0L246.4 130.1L247.3 128.6L248.4 129.5L249.3 128.4L250.3 128.7L251.7 127.4L252.4 128.5L253.7 127.6L254.4 128.6L255.4 128.1L256.5 128.7L257.8 128.3L258.7 129.0L260.5 128.6L260.8 129.8L262.5 129.6L263.1 130.5L265.6 130.5L265.3 131.9L267.5 132.1L267.3 133.6L269.0 133.9L269.0 136.0L266.6 137.1L266.2 135.1L264.6 136.9L263.8 134.1L262.7 135.2L261.9 132.8L260.9 135.0L259.8 132.2L259.3 134.8L257.9 131.7L257.9 135.2L256.0 131.6L256.0 133.6L254.3 131.0L254.7 133.9L252.6 131.2L253.1 133.7L251.0 131.3L251.1 133.4L249.2 131.6L249.0 133.4L247.4 132.0ZM245.0 132.0L243.6 130.1L242.9 128.6L241.7 129.0L240.7 127.5L239.7 128.3L238.6 127.0L237.7 127.9L236.6 127.0L235.6 127.7L234.4 127.0L233.5 127.6L232.0 126.9L231.4 128.0L230.0 127.6L229.3 128.6L227.8 128.3L227.0 129.1L224.7 128.9L224.8 130.2L222.7 130.3L222.8 131.9L221.5 132.1L221.0 134.0L223.3 135.6L223.8 133.4L225.3 135.1L226.1 132.5L227.1 133.8L228.0 131.4L228.8 133.8L230.1 131.0L230.2 134.4L232.0 130.9L231.8 134.0L233.8 130.7L233.0 134.2L235.5 130.8L234.7 133.7L237.2 130.8L237.0 132.7L239.0 130.7L238.6 133.1L240.7 131.3L240.4 133.6L242.4 132.1ZM245.0 132.0L243.5 131.6L241.9 131.5L242.3 132.2L240.6 132.4L240.9 132.9L238.7 133.3L239.5 133.9L237.1 134.6L237.7 134.8L234.1 136.2L236.4 136.4L233.0 138.0L235.3 138.3L232.3 139.9L234.1 140.3L231.4 141.9L233.0 142.7L231.0 144.0L231.8 145.1L230.0 146.4L230.4 147.7L228.7 149.0L230.0 151.0L232.3 150.3L232.1 148.6L234.4 149.9L234.2 146.5L235.9 148.1L235.7 144.3L237.3 146.8L237.2 142.3L238.3 144.6L238.4 140.5L239.2 142.3L239.4 138.7L240.4 141.9L240.8 137.6L241.1 139.8L241.6 136.2L241.9 138.3L242.6 135.1L242.7 137.2L243.5 134.3L243.5 136.4L244.5 133.8ZM245.0 132.0L246.6 131.7L248.1 131.6L248.1 132.3L250.0 132.4L249.6 133.1L251.9 133.5L251.4 133.8L254.8 134.8L252.8 135.4L255.7 136.4L254.5 136.8L258.1 138.3L256.0 138.7L259.4 140.3L257.3 140.9L260.1 142.4L258.4 143.4L260.5 144.6L260.0 145.8L262.1 147.2L261.4 148.6L263.1 149.8L262.0 152.0L259.2 152.3L259.3 149.7L257.4 150.6L257.5 147.3L256.1 147.7L256.2 144.8L254.6 146.2L254.5 142.8L253.3 144.0L253.2 140.8L251.8 143.3L251.5 139.3L250.7 141.3L250.3 137.8L249.4 141.3L248.7 136.9L248.6 138.1L248.0 135.3L247.6 137.8L246.7 134.7L246.6 136.2L245.7 133.7ZM245.0 132.0L244.3 129.5L244.4 127.9L243.4 127.2L243.4 124.3L241.7 125.7L241.5 123.5L240.7 123.7L240.2 120.3L238.8 122.6L238.3 120.1L237.4 121.1L236.5 118.2L235.6 120.3L234.7 118.2L234.0 119.2L232.9 117.1L232.2 118.8L231.3 117.5L230.5 118.1L229.5 116.8L228.7 118.0L228.2 117.4L227.0 118.0L227.3 120.4L228.4 119.3L228.0 122.0L229.8 120.2L229.0 122.8L231.1 121.0L229.2 124.7L232.3 122.3L230.9 125.0L233.8 123.0L232.5 125.7L235.2 123.9L232.6 127.5L236.3 125.5L235.5 127.6L238.1 126.2L236.7 129.1L239.4 127.7L238.4 130.3L240.9 129.2L240.3 131.7L242.5 130.9ZM245.0 132.0L245.6 129.4L245.8 127.2L247.2 127.7L247.5 125.4L248.7 126.0L249.2 123.4L250.4 124.6L251.1 122.3L252.1 123.4L253.0 121.2L253.9 122.2L254.9 120.0L255.6 121.2L256.9 118.9L257.4 120.5L258.8 118.5L259.4 120.2L260.4 119.1L261.2 119.9L262.2 119.0L263.1 119.8L263.8 119.2L265.0 120.0L264.5 122.7L263.3 121.2L263.1 123.3L261.7 121.7L262.6 125.2L260.2 122.8L260.8 125.3L258.6 123.3L259.4 126.0L257.0 124.0L257.8 126.6L255.4 124.8L256.5 127.7L253.9 125.9L254.7 128.5L252.3 126.9L253.8 130.0L251.0 128.4L251.4 130.7L249.2 129.6L249.7 132.1L247.6 131.1ZM245.0 132.0L246.4 133.4L247.7 135.4L246.8 134.9L248.4 137.4L247.4 136.5L249.7 139.9L247.8 138.2L250.3 141.9L247.3 140.0L249.0 142.6L247.6 141.8L249.5 144.6L248.0 143.6L250.0 146.7L248.4 145.5L250.7 149.1L248.1 147.6L250.0 150.4L247.7 149.7L249.0 151.5L247.7 151.8L248.7 153.3L247.0 154.0L244.6 154.5L245.5 152.0L244.1 152.8L245.1 149.9L243.2 151.7L244.5 147.9L243.6 149.0L244.7 145.9L242.3 148.5L243.8 144.0L242.5 146.2L243.9 142.1L242.0 144.8L243.5 140.4L242.5 142.2L243.8 138.6L242.7 140.1L243.8 136.9L242.3 138.7L243.5 135.3L243.3 135.8L244.1 133.6ZM243.9 132.2L245.3 141.7L246.5 151.5L247.5 161.5L248.3 171.6L249.0 181.9L249.5 192.4L249.8 203.1L250.0 214.0L253.0 214.0L252.7 203.1L252.3 192.3L251.7 181.8L250.9 171.4L250.0 161.2L248.8 151.2L247.5 141.4L246.1 131.8Z"/><circle cx="245" cy="132.5" r="2.6"/></g></g><circle cx="137.2" cy="175.4" r="131.5" fill="none" stroke="#231f20" stroke-width="1.5"/><g fill="#231f20"><path d="M30.1 91.1L30.7 87.5L31.9 85.0L30.0 84.3L31.3 81.6L29.8 81.0L31.7 77.1L28.5 78.0L30.0 74.8L28.1 74.8L29.9 70.8L27.5 71.7L29.6 67.0L26.0 68.9L27.7 65.1L25.1 65.9L26.7 62.1L23.7 63.1L24.9 60.1L22.3 60.3L23.2 58.1L21.3 57.5L22.2 55.3L19.1 55.1L16.6 58.7L18.8 58.4L16.5 61.7L19.4 61.3L17.0 64.7L20.2 64.3L15.8 68.0L20.4 67.4L17.4 70.7L21.5 70.3L18.2 73.7L22.4 73.3L18.7 76.7L23.2 76.3L19.3 79.8L23.9 79.4L21.3 82.6L25.2 82.3L22.6 85.6L26.3 85.4L25.0 88.5L27.7 88.3ZM30.1 91.1L28.8 88.0L27.1 85.5L29.0 85.1L27.1 82.3L29.5 82.2L27.7 79.6L29.0 79.3L26.2 75.1L30.0 76.5L27.9 73.3L29.9 73.6L27.2 69.6L30.8 70.8L28.6 67.5L31.4 68.0L29.4 65.0L31.8 65.2L29.8 62.2L32.7 62.4L31.1 60.0L33.6 59.7L32.6 58.1L35.1 57.1L37.7 60.0L35.8 60.1L38.5 62.9L35.8 62.9L38.2 65.7L35.4 65.7L38.9 68.5L35.4 68.6L38.5 71.3L35.0 71.4L40.3 74.2L35.4 74.4L38.2 77.0L34.4 77.1L37.0 79.8L33.7 79.9L37.6 82.6L33.7 82.8L36.9 85.5L33.2 85.7L34.5 88.3L32.0 88.4ZM30.1 91.1L28.9 87.5L28.7 84.9L26.7 85.0L26.2 82.2L24.2 83.0L23.6 80.5L21.9 81.1L20.8 78.5L19.4 79.7L18.1 77.4L16.7 78.8L15.4 76.9L14.1 78.0L12.6 76.5L11.5 77.9L10.2 76.9L8.9 77.8L7.6 77.1L6.3 78.2L5.2 77.8L3.6 78.7L2.5 78.5L1.1 80.1L3.1 82.6L4.1 80.5L5.1 82.9L6.6 80.4L6.8 83.8L8.9 80.7L8.7 84.2L11.2 81.0L10.2 85.1L13.3 81.7L12.7 84.6L15.5 82.0L15.0 85.1L17.7 82.8L17.1 86.1L19.9 84.1L19.5 87.2L22.2 85.5L21.0 89.3L24.2 87.6L25.0 90.2L26.9 89.3ZM30.1 91.1L28.2 89.8L27.4 89.0L26.0 89.6L25.1 89.1L23.7 89.4L22.1 88.8L21.2 89.4L18.4 89.0L18.9 90.6L16.3 90.6L16.3 91.7L12.7 92.2L14.0 93.8L11.1 94.6L11.3 95.8L7.6 97.1L9.1 98.7L6.2 100.0L6.9 102.0L4.6 103.2L4.5 105.5L2.3 106.8L3.1 110.1L6.8 110.0L6.8 107.1L9.3 107.3L9.4 103.8L11.7 105.1L12.0 101.1L13.9 103.5L14.5 98.8L15.7 100.3L16.4 96.5L17.7 99.9L18.8 95.2L19.3 99.0L20.8 94.2L20.9 96.7L22.4 92.9L22.3 96.1L24.2 92.5L23.6 95.6L25.9 92.4L25.6 94.3L27.6 92.1ZM30.1 91.1L32.0 88.4L32.5 86.9L34.3 86.3L35.5 84.0L37.1 85.3L38.2 83.6L39.7 84.1L41.4 82.3L42.5 83.9L43.9 82.8L45.3 83.7L46.8 82.9L48.1 83.7L50.2 82.9L51.0 84.1L53.4 83.6L54.0 85.0L56.5 84.8L56.8 86.5L59.0 86.5L59.7 88.3L61.6 88.5L62.1 91.1L59.1 92.6L58.5 90.2L56.5 92.6L55.4 89.2L54.3 92.7L52.6 88.5L51.9 91.3L50.1 87.5L50.2 92.3L47.6 87.7L47.9 91.2L45.3 87.3L45.9 91.0L43.0 87.4L43.2 90.0L40.6 87.4L41.0 90.5L38.3 88.2L38.5 91.1L35.9 89.1L35.6 91.8L33.5 90.4ZM30.1 91.1L32.2 90.4L33.3 89.9L34.5 90.6L35.9 90.2L37.0 90.9L39.5 90.6L39.5 92.0L42.1 92.1L42.3 93.0L46.3 93.7L44.8 94.9L49.1 96.0L47.2 97.4L50.8 98.8L49.6 100.2L53.3 101.8L52.2 103.3L55.8 105.1L54.4 107.0L57.4 108.7L56.3 111.3L57.9 112.3L58.1 116.1L54.2 115.5L54.3 112.6L51.6 112.3L51.6 108.9L49.3 108.8L49.2 105.5L46.4 108.7L46.0 103.3L44.3 106.0L43.7 100.7L42.6 102.0L42.0 98.1L40.7 100.5L39.8 96.4L38.9 99.7L37.6 95.3L37.1 97.4L35.8 93.9L35.4 95.8L34.0 93.0L33.7 95.1L32.1 92.7ZM30.1 91.1L31.3 87.7L31.4 85.8L32.9 84.7L33.1 81.5L35.3 82.4L35.6 79.7L37.1 79.7L37.7 75.9L39.3 77.5L40.1 73.6L41.7 75.6L42.7 72.0L44.4 74.3L45.2 71.8L46.6 72.4L47.9 69.3L49.3 71.3L50.3 69.3L51.8 70.3L52.8 68.7L54.4 69.4L55.2 68.2L57.1 69.1L56.7 72.6L55.1 71.2L54.8 74.1L52.9 72.5L53.9 76.6L50.9 74.3L51.1 77.3L48.5 75.4L50.8 80.3L46.9 77.7L49.2 82.2L44.9 79.5L46.6 83.5L42.6 81.1L43.6 84.6L40.1 82.8L40.8 86.2L37.8 84.8L39.2 88.7L35.9 87.2L35.1 90.0L33.2 89.2ZM30.1 91.1L28.7 93.0L27.3 95.2L28.2 95.1L26.5 97.8L27.9 97.3L26.0 100.3L27.6 99.5L25.5 102.8L26.9 101.8L24.4 105.9L26.7 104.2L24.0 108.5L27.1 106.7L25.1 109.9L26.8 109.2L24.6 112.7L26.9 111.8L25.0 114.8L26.6 114.5L24.6 117.6L27.1 117.2L25.8 119.2L28.1 120.1L30.1 119.4L29.3 117.4L31.3 117.9L30.1 114.7L32.1 115.9L30.6 112.1L32.2 113.3L30.8 109.5L32.8 111.3L31.2 107.0L33.5 109.5L31.7 104.5L34.2 107.7L32.2 102.2L33.5 104.4L31.8 99.8L32.9 101.3L31.6 97.6L32.6 98.6L31.4 95.4L32.6 96.3L31.5 93.3ZM30.1 91.1L29.3 87.4L29.6 85.2L27.6 84.4L27.8 81.7L25.8 81.6L25.9 78.7L24.0 78.9L23.9 75.5L22.4 76.2L22.0 71.8L20.3 74.1L19.7 69.8L18.0 72.3L17.2 68.5L15.5 70.9L14.7 68.3L13.3 69.4L12.4 66.9L11.0 68.3L10.1 66.5L8.6 67.5L7.9 66.5L6.1 67.1L5.7 71.1L7.6 69.4L6.8 72.9L9.4 70.9L8.0 74.8L11.2 72.5L10.7 75.3L13.4 73.6L11.7 77.5L15.1 75.5L12.8 79.7L16.8 77.6L15.8 80.8L19.1 79.2L15.9 83.8L20.4 81.9L20.2 84.8L23.1 83.6L21.3 87.6L24.7 86.4L24.6 89.6L27.0 88.9ZM30.1 91.1L28.1 92.0L26.1 93.1L26.4 93.3L23.1 95.3L25.0 95.1L21.4 97.5L23.7 97.2L20.0 99.8L22.5 99.4L18.8 102.2L21.3 101.8L17.5 104.8L20.0 104.5L16.2 107.6L19.3 107.4L16.2 110.0L18.0 110.4L14.8 113.1L17.3 113.8L15.3 115.7L16.4 117.3L14.9 118.6L16.1 121.1L18.7 120.1L18.4 118.0L20.5 117.9L20.1 114.8L22.0 115.3L21.5 111.8L23.8 113.7L23.2 109.1L25.6 112.5L25.0 106.6L26.0 108.4L25.5 103.8L27.8 107.6L27.3 101.8L28.0 103.7L27.7 99.3L29.0 101.5L28.8 97.2L29.5 98.6L29.4 95.2L30.4 96.7L30.4 93.5ZM30.1 91.1L32.2 91.9L34.5 93.2L33.6 93.5L36.3 95.2L34.7 95.4L37.4 97.2L36.3 97.2L39.8 99.7L37.9 99.3L42.0 102.4L38.4 102.1L41.4 104.4L40.3 104.4L44.4 107.7L41.0 107.4L44.3 110.1L42.1 110.4L45.0 113.0L43.3 113.6L46.1 116.1L43.9 117.2L45.6 118.8L44.1 121.1L41.2 120.6L41.6 118.1L39.2 118.9L39.7 115.0L37.9 115.9L38.5 111.9L35.9 114.7L36.6 109.3L34.6 112.3L35.3 106.6L33.8 109.2L34.3 104.0L32.4 107.6L32.9 101.8L32.3 103.3L32.6 99.2L30.9 102.3L31.2 97.4L30.7 98.5L30.8 95.2L29.9 96.4L29.9 93.4ZM28.7 91.2L29.5 101.0L30.0 110.8L30.2 120.6L30.2 130.4L29.8 140.1L29.2 149.9L28.3 159.7L27.1 169.4L25.7 179.2L23.9 189.0L21.9 198.8L19.6 208.6L23.4 209.4L25.7 199.6L27.6 189.7L29.3 179.8L30.7 169.9L31.8 160.0L32.6 150.1L33.1 140.3L33.4 130.4L33.3 120.5L33.0 110.7L32.4 100.8L31.5 91.0Z"/><circle cx="30.1" cy="91.6" r="2.6"/><path d="M48.5 132.0L49.6 130.5L50.9 128.6L49.9 129.1L51.8 126.5L49.6 127.7L51.4 125.3L49.7 126.4L51.6 123.7L49.3 125.0L51.0 122.6L49.2 123.7L51.0 121.1L49.3 122.3L51.4 119.3L49.2 121.0L51.2 118.0L48.3 119.8L49.7 117.7L48.2 118.4L49.6 116.3L47.8 117.2L48.9 115.5L46.5 116.0L43.4 117.4L45.5 117.5L43.4 118.7L45.6 118.8L43.2 120.0L45.6 120.1L41.5 121.3L45.1 121.5L42.4 122.6L45.5 122.8L41.9 124.0L45.4 124.2L42.6 125.3L45.8 125.5L41.6 126.6L45.5 126.9L42.4 127.9L45.9 128.2L43.3 129.3L46.4 129.5L44.9 130.6L47.0 130.8ZM48.5 132.0L50.4 130.9L51.2 130.2L52.4 130.7L53.3 130.2L54.6 130.7L55.7 130.2L56.8 130.7L58.6 130.2L59.1 131.3L61.1 131.0L61.3 132.2L63.6 132.2L63.7 133.3L66.5 133.5L66.1 134.8L69.1 135.3L68.2 137.0L70.2 137.5L70.7 139.0L73.1 139.8L72.7 141.8L74.2 142.3L74.5 145.0L71.5 145.4L71.2 143.1L69.2 143.3L68.9 140.8L67.0 141.9L66.5 139.0L64.8 141.5L64.0 137.6L62.9 140.5L61.8 136.4L61.1 138.6L59.9 135.0L59.4 137.9L57.9 134.3L57.7 136.9L56.1 133.6L55.9 135.6L54.3 133.0L54.3 135.3L52.6 132.9L52.5 134.9L50.8 133.0ZM48.5 132.0L48.1 130.2L47.9 128.4L47.0 129.0L46.7 127.1L46.2 127.5L45.4 124.7L44.9 126.8L44.0 124.5L43.6 126.2L42.5 124.2L42.3 125.7L41.1 124.0L40.9 125.3L39.8 124.0L39.6 125.1L38.4 124.0L38.3 125.2L37.4 124.6L37.0 125.3L36.3 124.9L35.7 125.3L34.8 125.0L34.5 126.0L34.9 128.5L35.9 126.9L35.4 129.9L37.1 127.4L36.4 129.7L38.1 127.4L37.3 129.6L39.2 127.5L38.1 129.9L40.2 127.9L38.7 130.5L41.1 128.4L39.8 130.7L42.1 128.8L40.4 131.4L43.0 129.5L41.1 132.1L44.0 130.3L42.4 132.5L45.1 131.1L44.2 132.8L46.4 131.8ZM48.5 132.0L47.0 131.7L45.2 131.6L45.5 132.1L43.1 132.4L44.1 132.9L41.3 133.6L42.8 134.1L40.2 135.1L41.3 135.3L37.9 136.7L40.1 137.0L37.2 138.5L38.5 138.7L35.0 140.7L37.6 141.0L35.1 142.6L36.5 143.4L34.5 144.8L35.1 145.9L33.1 147.3L33.9 148.6L32.2 149.9L33.5 152.0L36.2 152.2L36.0 149.7L37.6 149.7L37.4 147.1L39.2 148.3L39.1 144.9L40.7 146.8L40.6 142.8L41.7 144.5L41.7 140.8L42.8 143.0L43.0 139.2L44.1 142.4L44.4 138.0L44.7 140.0L45.2 136.4L45.5 138.0L46.0 135.2L46.4 137.6L47.1 134.5L47.1 136.2L48.0 133.7ZM48.5 132.0L50.3 131.9L52.0 131.8L52.0 132.5L54.3 132.8L53.6 133.7L55.8 134.2L55.6 134.6L59.1 135.7L57.3 136.3L60.7 137.7L58.7 138.5L61.3 139.8L60.5 140.5L63.6 142.2L62.0 143.1L64.5 144.6L63.7 145.7L66.4 147.5L65.2 148.8L67.5 150.3L66.6 152.2L68.2 153.3L67.5 156.0L64.5 155.6L64.7 153.2L62.4 153.5L62.6 150.3L60.6 151.3L60.7 147.5L58.9 149.3L58.9 145.1L57.5 146.7L57.5 142.7L55.8 145.9L55.5 141.0L54.8 142.7L54.5 138.9L53.4 142.1L52.8 137.6L52.2 140.4L51.5 136.3L51.3 137.3L50.6 134.7L50.1 136.1L49.3 133.8ZM48.5 132.0L49.2 129.8L49.4 128.0L50.5 128.3L50.9 126.1L51.9 126.9L52.6 124.7L53.4 125.8L54.3 123.6L55.0 124.9L56.0 122.9L56.5 124.0L57.9 121.8L58.3 123.7L59.4 122.4L59.9 123.2L61.3 121.8L61.6 123.2L62.7 122.4L63.2 123.3L64.1 122.8L64.9 123.5L65.5 123.2L66.5 124.0L65.6 126.1L64.8 124.7L64.9 127.7L63.3 125.4L63.6 127.7L61.9 125.5L63.2 129.2L60.6 126.4L61.7 129.0L59.2 126.5L61.3 130.4L58.1 127.5L60.1 130.7L56.8 128.1L57.4 129.9L55.1 128.3L56.4 131.0L53.8 129.4L54.6 131.5L52.3 130.3L52.8 132.4L50.8 131.4ZM48.5 132.0L47.0 130.8L46.2 129.8L45.2 130.4L44.3 129.7L43.4 130.2L42.3 129.6L41.6 130.1L40.0 129.4L39.6 130.3L37.8 129.9L37.6 130.6L35.0 130.3L35.7 131.6L33.5 131.5L33.8 132.7L31.5 132.8L31.6 133.8L29.0 134.2L29.9 135.7L28.3 136.1L28.0 137.6L26.7 137.9L26.5 140.0L28.9 140.6L29.2 138.8L30.9 140.4L31.5 137.5L32.7 140.1L33.6 136.5L34.4 139.3L35.4 135.5L35.8 139.0L37.3 134.8L37.3 137.4L38.8 133.8L38.8 136.2L40.3 133.1L40.1 136.0L41.9 132.9L41.2 136.1L43.4 133.0L43.0 135.0L44.9 132.7L44.8 134.5L46.4 132.7ZM48.5 132.0L49.6 133.4L50.7 135.0L50.1 135.0L51.4 137.1L50.7 136.5L52.7 139.5L51.3 138.2L53.7 141.9L51.5 139.9L53.9 143.6L51.5 141.8L53.7 145.2L51.5 143.6L53.5 146.8L51.5 145.6L53.5 148.5L51.9 147.5L54.0 150.8L51.2 149.7L52.4 151.5L51.3 151.8L52.4 153.5L50.5 154.0L48.1 154.5L49.0 152.0L47.4 153.0L48.5 149.9L46.5 151.9L47.9 147.9L47.1 149.0L48.2 145.9L46.6 147.5L47.8 144.0L46.0 146.2L47.4 142.1L45.7 144.6L47.1 140.3L45.3 143.1L46.8 138.6L45.4 141.1L46.8 136.9L46.6 137.8L47.5 135.2L46.5 136.2L47.4 133.6ZM48.5 132.0L48.3 129.9L47.8 128.0L48.9 128.3L48.4 125.9L49.5 126.7L48.9 123.8L50.3 125.2L49.9 122.4L50.8 123.7L50.4 120.1L52.0 122.5L51.7 119.6L53.0 121.4L52.9 118.8L53.9 120.2L53.8 117.5L54.8 119.1L54.9 116.6L55.9 118.2L56.0 116.1L56.9 117.3L57.1 115.5L58.5 117.0L59.7 119.3L58.3 118.6L60.4 121.2L57.9 120.0L59.8 122.2L57.2 121.0L60.3 123.8L56.8 122.4L59.3 124.8L55.9 123.4L58.7 125.9L55.1 124.6L56.9 126.6L54.0 125.6L55.9 127.7L53.1 126.9L54.7 128.9L52.2 128.2L54.5 130.5L51.6 129.7L52.7 131.6L50.5 131.0ZM47.4 131.9L46.6 141.4L45.7 150.9L44.5 160.5L43.1 170.1L41.5 179.7L39.7 189.3L37.7 199.0L35.5 208.7L38.5 209.3L40.6 199.6L42.5 189.8L44.2 180.1L45.7 170.4L46.9 160.8L48.0 151.2L48.9 141.6L49.6 132.1Z"/><circle cx="48.5" cy="132.5" r="2.6"/></g><text x="7.2" y="21.0" font-family="'Liberation Sans',sans-serif" font-weight="700" font-style="italic" font-size="25" textLength="260" lengthAdjust="spacingAndGlyphs" fill="#231f20" stroke="#231f20" stroke-width="1.5" stroke-linejoin="round">Party on the Pier</text></g></defs><rect x="708.5" y="162.5" width="380" height="580" fill="url(#chk)"/><path d="M708.5 734V162.5H1081" fill="none" stroke="#0b84c6" stroke-width="1" stroke-dasharray="3.7 3.7"/><use href="#art" x="717.6" y="168.2"/><rect x="717.6" y="168.2" width="270.6" height="308.2" fill="none" stroke="#22c55e" stroke-width="1.1"/><use href="#art" x="1001.5" y="168.2"/><rect x="1001.5" y="168.2" width="270.6" height="308.2" fill="none" stroke="#22c55e" stroke-width="1.1"/><use href="#art" x="717.6" y="490.2"/><rect x="717.6" y="490.2" width="270.6" height="308.2" fill="none" stroke="#22c55e" stroke-width="1.1"/><use href="#art" x="1001.5" y="490.2"/><rect x="1001.5" y="490.2" width="270.6" height="308.2" fill="none" stroke="#22c55e" stroke-width="1.1"/><rect x="716.7" y="167.29999999999998" width="272.40000000000003" height="310.0" fill="none" stroke="#ddb4fb" stroke-width="0.9"/><path d="M853.1 134V167.4" stroke="#e2b5ff" stroke-width="1.7"/><circle cx="853.1" cy="128.3" r="6.4" fill="#000"/><circle cx="717.8000000000001" cy="168.1" r="6.1" fill="#000"/><circle cx="988.4000000000001" cy="168.1" r="6.1" fill="#000"/><circle cx="717.8000000000001" cy="476.29999999999995" r="6.1" fill="#000"/><circle cx="988.4000000000001" cy="476.29999999999995" r="6.1" fill="#000"/><rect x="717.6" y="168.2" width="270.6" height="308.2" fill="none" stroke="#22c55e" stroke-width="1.1"/></svg>
<div style="left:-20px;top:10px;width:246px;height:142px;border:1px dashed #d3d6de;border-radius:6px"></div>
<div style="left:10px;top:67px;width:131px;height:30px;background:#0f172a;border-radius:7px"></div>
<svg style="left:23.3px;top:73px" width="19" height="19" viewBox="0 0 24 24" fill="none" stroke="#fff" stroke-width="2" stroke-linecap="round" stroke-linejoin="round"><path d="M12 12.6v7.2M8.6 15.6l3.4-3.3 3.4 3.3" /><path d="M7.2 18.8h-0.7a4.6 4.6 0 0 1-0.6-9.15 6.3 6.3 0 0 1 12.2 0.9 4.1 4.1 0 0 1-0.7 8.2h-0.7"/></svg>
<div style="left:2px;top:162px;width:70px;height:70px;box-sizing:border-box;border:1px solid #e2e4ea;overflow:hidden;background:#fff"><svg style="left:0;top:0" width="68" height="68" viewBox="-18 0.8 308 308"><rect x="-19" y="0" width="312" height="312" fill="url(#chk2)"/><use href="#art"/></svg></div>
<div style="left:54px;top:164px;width:16px;height:16px;border-radius:8px;background:#ef4444"></div>
<svg style="left:54px;top:164px" width="16" height="16" viewBox="0 0 16 16" ><path d="M4.3 4.3l7.4 7.4M11.7 4.3l-7.4 7.4" stroke="#fff" stroke-width="1.4" stroke-linecap="round"/></svg>
<div style="left:55.4px;top:213px;width:15.6px;height:17.9px;background:#0f172a;border-radius:3px"></div>
<div style="left:-5px;top:240px;width:232px;height:1px;background:#e5e7eb"></div>
<div style="left:-10px;top:249px;width:166px;height:30.3px;background:#0f172a;border-radius:6px"></div>
<div style="left:52.2px;top:291px;width:174.8px;height:29.4px;box-sizing:border-box;border:1px solid #cfd3df;border-radius:5px;background:#fff"></div>
<div style="left:52.2px;top:329.3px;width:174.8px;height:29.4px;box-sizing:border-box;border:1px solid #cfd3df;border-radius:5px;background:#fff"></div>
<div style="left:52.2px;top:367.2px;width:174.8px;height:29.4px;box-sizing:border-box;border:1px solid #cfd3df;border-radius:5px;background:#fff"></div>
<div style="left:186px;top:294px;width:15px;height:23px;background:#f6f6f7"></div><svg style="left:189.2px;top:296.6px" width="8.8" height="5.6" viewBox="0 0 10 6"><path d="M5 0 L10 6 L0 6Z" fill="#8b8b8b"/></svg><svg style="left:189.2px;top:310.4px" width="8.8" height="5.6" viewBox="0 0 10 6"><path d="M0 0 L10 0 L5 6Z" fill="#8b8b8b"/></svg>
<div style="left:186px;top:332.3px;width:15px;height:23px;background:#f6f6f7"></div><svg style="left:189.2px;top:334.9px" width="8.8" height="5.6" viewBox="0 0 10 6"><path d="M5 0 L10 6 L0 6Z" fill="#8b8b8b"/></svg><svg style="left:189.2px;top:348.7px" width="8.8" height="5.6" viewBox="0 0 10 6"><path d="M0 0 L10 0 L5 6Z" fill="#8b8b8b"/></svg>
<svg style="left:200.2px;top:374.3px" width="12" height="15.5" viewBox="0 0 12 15.5" ><path d="M3.3 6.4V4.3a2.7 2.7 0 0 1 5.4 0v2.1" fill="none" stroke="#111" stroke-width="1.5"/><rect x="0.8" y="6" width="10.4" height="8.6" rx="1.2" fill="#111"/><circle cx="6" cy="10.3" r="1.15" fill="#fff"/></svg>
<div style="left:-10px;top:405.5px;width:237px;height:122.7px;box-sizing:border-box;border:1px solid #dfe2ea;border-radius:5px"></div>
<div style="left:37.5px;top:414.5px;width:79.5px;height:29.5px;box-sizing:border-box;border:1px solid #cfd3df;border-radius:5px;background:#fff"></div>
<div style="left:37.5px;top:452.5px;width:79.5px;height:29.5px;box-sizing:border-box;border:1px solid #cfd3df;border-radius:5px;background:#fff"></div>
<div style="left:97px;top:417.5px;width:15px;height:23px;background:#f6f6f7"></div><svg style="left:100.0px;top:420.6px" width="8.8" height="5.6" viewBox="0 0 10 6"><path d="M5 0 L10 6 L0 6Z" fill="#8b8b8b"/></svg><svg style="left:100.0px;top:432.6px" width="8.8" height="5.6" viewBox="0 0 10 6"><path d="M0 0 L10 0 L5 6Z" fill="#8b8b8b"/></svg>
<div style="left:97px;top:455.5px;width:15px;height:23px;background:#f6f6f7"></div><svg style="left:100.0px;top:458.6px" width="8.8" height="5.6" viewBox="0 0 10 6"><path d="M5 0 L10 6 L0 6Z" fill="#8b8b8b"/></svg><svg style="left:100.0px;top:470.6px" width="8.8" height="5.6" viewBox="0 0 10 6"><path d="M0 0 L10 0 L5 6Z" fill="#8b8b8b"/></svg>
<div style="left:174px;top:455px;width:44px;height:24px;border-radius:12px;background:#0f172a"></div><div style="left:196px;top:457px;width:20px;height:20px;border-radius:10px;background:#fff"></div>
<div style="left:-20px;top:490px;width:91.5px;height:30px;background:#0f172a;border-radius:6px"></div>
<div style="left:80px;top:490px;width:138px;height:30px;background:#0f172a;border-radius:6px"></div>
<div style="left:183px;top:545px;width:44px;height:24px;border-radius:12px;background:#e5e7eb"></div><div style="left:185px;top:547px;width:20px;height:20px;border-radius:10px;background:#fff;box-shadow:0 0 0 1px #d4d7de inset,0 1px 2px rgba(0,0,0,.15)"></div>
<div style="left:183px;top:577px;width:44px;height:24px;border-radius:12px;background:#e5e7eb"></div><div style="left:185px;top:579px;width:20px;height:20px;border-radius:10px;background:#fff;box-shadow:0 0 0 1px #d4d7de inset,0 1px 2px rgba(0,0,0,.15)"></div>
<div style="left:183px;top:617px;width:44px;height:24px;border-radius:12px;background:#e5e7eb"></div><div style="left:185px;top:619px;width:20px;height:20px;border-radius:10px;background:#fff;box-shadow:0 0 0 1px #d4d7de inset,0 1px 2px rgba(0,0,0,.15)"></div>
<div style="left:183px;top:649px;width:44px;height:24px;border-radius:12px;background:#e5e7eb"></div><div style="left:185px;top:651px;width:20px;height:20px;border-radius:10px;background:#fff;box-shadow:0 0 0 1px #d4d7de inset,0 1px 2px rgba(0,0,0,.15)"></div>
<div style="left:4.4px;top:681.5px;width:222.1px;height:33.3px;box-sizing:border-box;border:1px solid #cfd3df;border-radius:5px;background:#fff"></div>
<div style="left:42.2px;top:685.5px;width:14.5px;height:25px;background:#f6f6f7"></div><svg style="left:45.0px;top:688.5px" width="8.8" height="5.6" viewBox="0 0 10 6"><path d="M5 0 L10 6 L0 6Z" fill="#8b8b8b"/></svg><svg style="left:45.0px;top:702.1px" width="8.8" height="5.6" viewBox="0 0 10 6"><path d="M0 0 L10 0 L5 6Z" fill="#8b8b8b"/></svg>
<div style="left:68.8px;top:695.0px;width:153.2px;height:5.4px;background:#0f172a;border-radius:3px"></div>
<div style="left:141.7px;top:688.0px;width:8.3px;height:20px;box-sizing:border-box;border:1.6px solid #0f172a;border-radius:2.5px;background:#fff"></div>
<div style="left:4.4px;top:722.8px;width:222.1px;height:33.3px;box-sizing:border-box;border:1px solid #cfd3df;border-radius:5px;background:#fff"></div>
<div style="left:42.2px;top:726.8px;width:14.5px;height:25px;background:#f6f6f7"></div><svg style="left:45.0px;top:729.8px" width="8.8" height="5.6" viewBox="0 0 10 6"><path d="M5 0 L10 6 L0 6Z" fill="#8b8b8b"/></svg><svg style="left:45.0px;top:743.4px" width="8.8" height="5.6" viewBox="0 0 10 6"><path d="M0 0 L10 0 L5 6Z" fill="#8b8b8b"/></svg>
<div style="left:68.8px;top:736.3px;width:153.2px;height:5.4px;background:#0f172a;border-radius:3px"></div>
<div style="left:141.7px;top:729.3px;width:8.3px;height:20px;box-sizing:border-box;border:1.6px solid #0f172a;border-radius:2.5px;background:#fff"></div>
<div style="left:235px;top:0px;width:1px;height:734px;background:#e2e4ea"></div>
<div style="left:236px;top:61px;width:845px;height:1px;background:#e2e4ea"></div>
<div style="left:242px;top:20px;width:100px;height:36.5px;box-sizing:border-box;border:1px solid #d6d9e3;border-radius:7px;background:#fff;box-shadow:0 1px 2px rgba(0,0,0,.06)"></div>
<svg style="left:316.5px;top:38.5px" width="8.5" height="7" viewBox="0 0 8.5 7" ><path d="M1 1.6l3.25 3.3L7.5 1.6" fill="none" stroke="#111827" stroke-width="1.5" stroke-linecap="round" stroke-linejoin="round"/></svg>
<div style="left:356.5px;top:20px;width:1.5px;height:41px;background:#dfe2e8"></div>
<div style="left:422.3px;top:20px;width:1.5px;height:41px;background:#dfe2e8"></div>
<div style="left:488.5px;top:20px;width:1.5px;height:41px;background:#dfe2e8"></div>
<div style="left:676.8px;top:20px;width:1.5px;height:41px;background:#dfe2e8"></div>
<div style="left:363px;top:31px;width:22px;height:22px;background:#0f172a;border-radius:4px"></div>
<svg style="left:365.5px;top:37.4px" width="17" height="9" viewBox="0 0 17 9" ><path d="M3.4 5.6 C6.6 2.1 12.6 2.3 15.8 7.5" fill="none" stroke="#fff" stroke-width="2.3" stroke-linecap="round"/><path d="M0.3 0.9 L0.9 7.6 L7.0 6.9 Z" fill="#fff" stroke="#fff" stroke-width="0.5" stroke-linejoin="round"/></svg>
<svg style="left:397.6px;top:37.6px" width="17" height="9" viewBox="0 0 17 9" ><g transform="translate(17,0) scale(-1,1)"><path d="M3.4 5.6 C6.6 2.1 12.6 2.3 15.8 7.5" fill="none" stroke="#9ca3af" stroke-width="2.3" stroke-linecap="round"/><path d="M0.3 0.9 L0.9 7.6 L7.0 6.9 Z" fill="#9ca3af" stroke="#9ca3af" stroke-width="0.5" stroke-linejoin="round"/></g></svg>
<div style="left:428.3px;top:30.4px;width:23px;height:22.8px;box-sizing:border-box;border:1px solid #e5e7eb;border-radius:5px;background:#fff;box-shadow:0 1px 2px rgba(0,0,0,.05)"></div><svg style="left:432.8px;top:33.3px" width="14.2" height="17.6" viewBox="0 0 24 24" fill="none" stroke="#111" stroke-width="2.3" stroke-linecap="round" stroke-linejoin="round" preserveAspectRatio="none"><g transform="translate(24,0) scale(-1,1)"><path d="M18 11V6a2 2 0 0 0-4 0M14 10V4a2 2 0 0 0-4 0v2M10 10.5V6a2 2 0 0 0-4 0v8"/><path d="M18 8a2 2 0 1 1 4 0v6a8 8 0 0 1-8 8h-2c-2.8 0-4.5-.86-5.99-2.34l-3.6-3.6a2 2 0 0 1 2.83-2.82L7 15"/></g></svg>
<div style="left:460.3px;top:30.4px;width:23px;height:22.8px;box-sizing:border-box;border:1px solid #e5e7eb;border-radius:5px;background:#fff;box-shadow:0 1px 2px rgba(0,0,0,.05)"></div><svg style="left:465.2px;top:35.2px" width="13.8" height="13.8" viewBox="0 0 13.8 13.8" ><rect x="0" y="0" width="13.8" height="13.8" rx="2" fill="#111"/><rect x="1.70" y="1.70" width="2.5" height="2.5" fill="#fff"/><rect x="1.70" y="5.65" width="2.5" height="2.5" fill="#fff"/><rect x="1.70" y="9.60" width="2.5" height="2.5" fill="#fff"/><rect x="5.65" y="1.70" width="2.5" height="2.5" fill="#fff"/><rect x="5.65" y="5.65" width="2.5" height="2.5" fill="#fff"/><rect x="5.65" y="9.60" width="2.5" height="2.5" fill="#fff"/><rect x="9.60" y="1.70" width="2.5" height="2.5" fill="#fff"/><rect x="9.60" y="5.65" width="2.5" height="2.5" fill="#fff"/><rect x="9.60" y="9.60" width="2.5" height="2.5" fill="#fff"/></svg>
<div style="left:494px;top:33px;width:18px;height:18px;background:#0f172a;border-radius:3px"></div><svg style="left:494px;top:33px" width="18" height="18" viewBox="0 0 18 18"><path d="M4.6 9.4 L7.7 12.3 L13.4 5.9" fill="none" stroke="#fff" stroke-width="2" stroke-linecap="round" stroke-linejoin="round"/></svg>
<div style="left:593.3px;top:20px;width:63.4px;height:35.5px;box-sizing:border-box;border:1px solid #d6d9e3;border-radius:5px;background:#fff;box-shadow:0 1px 2px rgba(0,0,0,.05)"></div>
<svg style="left:644.5px;top:32.2px" width="9.2" height="6" viewBox="0 0 10 6"><path d="M5 0 L10 6 L0 6Z" fill="#8b8b8b"/></svg><svg style="left:644.5px;top:44.4px" width="9.2" height="6" viewBox="0 0 10 6"><path d="M0 0 L10 0 L5 6Z" fill="#8b8b8b"/></svg>
<div style="left:682.3px;top:30.4px;width:23px;height:22.8px;box-sizing:border-box;border:1px solid #e5e7eb;border-radius:5px;background:#fff;box-shadow:0 1px 2px rgba(0,0,0,.05)"></div><svg style="left:686.5px;top:35px" width="14.5" height="13" viewBox="0 0 14.5 13" ><path d="M8.3 1.2 C5.4 1.1 3.0 3.4 2.9 7.0" fill="none" stroke="#0f172a" stroke-width="1.5" stroke-linecap="round"/><path d="M0.4 6.2 L5.4 6.2 L2.9 8.9 Z" fill="#0f172a" stroke="#0f172a" stroke-width="0.6" stroke-linejoin="round"/><path d="M7.6 4.7 h3.0 l2.2 2.3 v4.3 q0 0.6 -0.6 0.6 h-4.6 q-0.6 0 -0.6 -0.6 v-6 q0 -0.6 0.6 -0.6z" fill="none" stroke="#0f172a" stroke-width="1.6" stroke-linejoin="round"/><path d="M10.4 4.9v2.3h2.3z" fill="#0f172a"/></svg>
<div style="left:707.4px;top:30.4px;width:23px;height:22.8px;box-sizing:border-box;border:1px solid #e5e7eb;border-radius:5px;background:#fff;box-shadow:0 1px 2px rgba(0,0,0,.05)"></div><svg style="left:711.7px;top:35px" width="14.5" height="13" viewBox="0 0 14.5 13" ><g transform="translate(14.5,0) scale(-1,1)"><path d="M8.3 1.2 C5.4 1.1 3.0 3.4 2.9 7.0" fill="none" stroke="#0f172a" stroke-width="1.5" stroke-linecap="round"/><path d="M0.4 6.2 L5.4 6.2 L2.9 8.9 Z" fill="#0f172a" stroke="#0f172a" stroke-width="0.6" stroke-linejoin="round"/></g><g transform="translate(-5.6,0)"><path d="M7.6 4.7 h3.0 l2.2 2.3 v4.3 q0 0.6 -0.6 0.6 h-4.6 q-0.6 0 -0.6 -0.6 v-6 q0 -0.6 0.6 -0.6z" fill="none" stroke="#0f172a" stroke-width="1.6" stroke-linejoin="round"/><path d="M10.4 4.9v2.3h2.3z" fill="#0f172a"/></g></svg>
<div style="left:739.5px;top:30.4px;width:23px;height:22.8px;box-sizing:border-box;border:1px solid #e5e7eb;border-radius:5px;background:#fff;box-shadow:0 1px 2px rgba(0,0,0,.05)"></div><svg style="left:743.5px;top:36.5px" width="15" height="11.5" viewBox="0 0 15 11.5" fill="none" stroke="#1e293b" stroke-width="2" stroke-linecap="round" stroke-linejoin="round"><path d="M1 0.6v10.3M14 0.6v10.3" stroke-width="1.7"/><path d="M3.8 5.75h7.4M5.6 3.9L3.7 5.75 5.6 7.6M9.4 3.9l1.9 1.85-1.9 1.85" stroke-width="1.3"/></svg>
<div style="left:764.5px;top:30.4px;width:23px;height:22.8px;box-sizing:border-box;border:1px solid #e5e7eb;border-radius:5px;background:#fff;box-shadow:0 1px 2px rgba(0,0,0,.05)"></div><svg style="left:770.2px;top:34.3px" width="12" height="15" viewBox="0 0 12 15" fill="none" stroke="#1e293b" stroke-width="2" stroke-linecap="round" stroke-linejoin="round"><path d="M0.8 1h10.4M0.8 14h10.4" stroke-width="1.7"/><path d="M6 3.8v7.4M4.1 5.6L6 3.7l1.9 1.9M4.1 9.4L6 11.3l1.9-1.9" stroke-width="1.3"/></svg>
<div style="left:796.5px;top:30.4px;width:23px;height:22.8px;box-sizing:border-box;border:1px solid #e5e7eb;border-radius:5px;background:#fff;box-shadow:0 1px 2px rgba(0,0,0,.05)"></div><svg style="left:800.3px;top:36.5px" width="16" height="11.5" viewBox="0 0 16 11.5" fill="none" stroke="#1e293b" stroke-width="2" stroke-linecap="round" stroke-linejoin="round"><path d="M8 0.6v10.3" stroke-width="1.7"/><path d="M0.8 5.75h4.4M3.6 4.1l1.7 1.65L3.6 7.4M15.2 5.75h-4.4M12.4 4.1l-1.7 1.65 1.7 1.65" stroke-width="1.3"/></svg>
<div style="left:821.6px;top:30.4px;width:23px;height:22.8px;box-sizing:border-box;border:1px solid #e5e7eb;border-radius:5px;background:#fff;box-shadow:0 1px 2px rgba(0,0,0,.05)"></div><svg style="left:827.3px;top:34.3px" width="11.5" height="15.4" viewBox="0 0 11.5 15.4" fill="none" stroke="#1e293b" stroke-width="2" stroke-linecap="round" stroke-linejoin="round"><path d="M0.8 7.7h9.9" stroke-width="1.7"/><path d="M5.75 0.8v4.2M4.1 3.4l1.65 1.7 1.65-1.7M5.75 14.6v-4.2M4.1 12l1.65-1.7 1.65 1.7" stroke-width="1.3"/></svg>
<div style="left:846.6px;top:30.4px;width:23px;height:22.8px;box-sizing:border-box;border:1px solid #e5e7eb;border-radius:5px;background:#fff;box-shadow:0 1px 2px rgba(0,0,0,.05)"></div><svg style="left:851.6px;top:35.6px" width="13" height="13" viewBox="0 0 13 13" fill="none" stroke="#1e293b" stroke-width="2" stroke-linecap="round" stroke-linejoin="round"><path d="M0.9 3.9V2.2A1.3 1.3 0 0 1 2.2 0.9h1.7M9.1 0.9h1.7a1.3 1.3 0 0 1 1.3 1.3v1.7M12.1 9.1v1.7a1.3 1.3 0 0 1-1.3 1.3H9.1M3.9 12.1H2.2a1.3 1.3 0 0 1-1.3-1.3V9.1" stroke-width="1.6"/><circle cx="6.5" cy="6.5" r="2.6" stroke-width="1.6"/></svg>
<div style="left:878.7px;top:30.4px;width:23px;height:22.8px;box-sizing:border-box;border:1px solid #e5e7eb;border-radius:5px;background:#fff;box-shadow:0 1px 2px rgba(0,0,0,.05)"></div><svg style="left:883px;top:35.2px" width="13.5" height="14" viewBox="0 0 13.5 14" fill="none" stroke="#1e293b" stroke-width="2" stroke-linecap="round" stroke-linejoin="round"><path d="M1 0.9v12.2" stroke-width="1.8"/><path d="M4.2 4.4h8.6M4.2 8.8h5" stroke-width="2.1" stroke-linecap="butt"/></svg>
<div style="left:903.7px;top:30.4px;width:23px;height:22.8px;box-sizing:border-box;border:1px solid #e5e7eb;border-radius:5px;background:#fff;box-shadow:0 1px 2px rgba(0,0,0,.05)"></div><svg style="left:908.2px;top:35.2px" width="13.5" height="14" viewBox="0 0 13.5 14" fill="none" stroke="#1e293b" stroke-width="2" stroke-linecap="round" stroke-linejoin="round"><path d="M12.5 0.9v12.2" stroke-width="1.8"/><path d="M9.3 4.4h-8.6M9.3 8.8h-5" stroke-width="2.1" stroke-linecap="butt"/></svg>
<div style="left:928.7px;top:30.4px;width:23px;height:22.8px;box-sizing:border-box;border:1px solid #e5e7eb;border-radius:5px;background:#fff;box-shadow:0 1px 2px rgba(0,0,0,.05)"></div><svg style="left:933px;top:35px" width="14.5" height="13.5" viewBox="0 0 14.5 13.5" fill="none" stroke="#1e293b" stroke-width="2" stroke-linecap="round" stroke-linejoin="round"><path d="M1 1h12.5" stroke-width="1.8"/><path d="M5 4.2v8.6M9.6 4.2v5" stroke-width="2.1" stroke-linecap="butt"/></svg>
<div style="left:953.7px;top:30.4px;width:23px;height:22.8px;box-sizing:border-box;border:1px solid #e5e7eb;border-radius:5px;background:#fff;box-shadow:0 1px 2px rgba(0,0,0,.05)"></div><svg style="left:958px;top:35px" width="14.5" height="13.5" viewBox="0 0 14.5 13.5" fill="none" stroke="#1e293b" stroke-width="2" stroke-linecap="round" stroke-linejoin="round"><path d="M1 12.5h12.5" stroke-width="1.8"/><path d="M5 9.3v-8.6M9.6 9.3v-5" stroke-width="2.1" stroke-linecap="butt"/></svg>
<div style="left:978.7px;top:30.4px;width:23px;height:22.8px;box-sizing:border-box;border:1px solid #e5e7eb;border-radius:5px;background:#fff;box-shadow:0 1px 2px rgba(0,0,0,.05)"></div><svg style="left:985px;top:35.4px" width="10.4" height="12.6" viewBox="0 0 10.4 12.6" ><path d="M0.4 2.1h9.6M3.4 2V0.9h3.6V2" stroke="#c2321c" stroke-width="1.5" fill="none"/><path d="M1.3 3.2h7.8v8a1.1 1.1 0 0 1-1.1 1.1H2.4a1.1 1.1 0 0 1-1.1-1.1z" fill="#c2321c"/><path d="M3.9 4.9v5.2M6.5 4.9v5.2" stroke="#fff" stroke-width="1.1"/></svg>
<div style="left:236px;top:62px;width:16px;height:16px;background:#0f172a"></div>
<div style="left:252px;top:77px;width:829px;height:1px;background:#e2e4ea"></div>
<div style="left:251px;top:78px;width:1px;height:656px;background:#e2e4ea"></div>
<svg style="left:0;top:0;font-family:'Liberation Sans',sans-serif" width="1081" height="734" viewBox="0 0 1081 734"><rect x="708" y="62" width="1" height="15" fill="#e2e4ea"/><text x="710.10" y="70.9" font-size="9.6" textLength="3.9" lengthAdjust="spacingAndGlyphs" fill="#0f172a" stroke="#0f172a" stroke-width="0.35">0</text><rect x="722" y="71" width="1" height="6" fill="#0f172a"/><rect x="735" y="71" width="1" height="6" fill="#0f172a"/><rect x="749" y="71" width="1" height="6" fill="#0f172a"/><rect x="762" y="71" width="1" height="6" fill="#0f172a"/><rect x="776" y="71" width="1" height="6" fill="#0f172a"/><rect x="789" y="71" width="1" height="6" fill="#0f172a"/><rect x="803" y="71" width="1" height="6" fill="#0f172a"/><rect x="816" y="71" width="1" height="6" fill="#0f172a"/><rect x="830" y="71" width="1" height="6" fill="#0f172a"/><rect x="843" y="62" width="1" height="15" fill="#e2e4ea"/><text x="845.10" y="70.9" font-size="9.6" textLength="3.9" lengthAdjust="spacingAndGlyphs" fill="#0f172a" stroke="#0f172a" stroke-width="0.35">5</text><rect x="857" y="71" width="1" height="6" fill="#0f172a"/><rect x="870" y="71" width="1" height="6" fill="#0f172a"/><rect x="884" y="71" width="1" height="6" fill="#0f172a"/><rect x="897" y="71" width="1" height="6" fill="#0f172a"/><rect x="911" y="71" width="1" height="6" fill="#0f172a"/><rect x="924" y="71" width="1" height="6" fill="#0f172a"/><rect x="938" y="71" width="1" height="6" fill="#0f172a"/><rect x="951" y="71" width="1" height="6" fill="#0f172a"/><rect x="965" y="71" width="1" height="6" fill="#0f172a"/><rect x="978" y="62" width="1" height="15" fill="#e2e4ea"/><text x="980.10" y="70.9" font-size="9.6" textLength="7.8" lengthAdjust="spacingAndGlyphs" fill="#0f172a" stroke="#0f172a" stroke-width="0.35">10</text><rect x="992" y="71" width="1" height="6" fill="#0f172a"/><rect x="1005" y="71" width="1" height="6" fill="#0f172a"/><rect x="1019" y="71" width="1" height="6" fill="#0f172a"/><rect x="1032" y="71" width="1" height="6" fill="#0f172a"/><rect x="1046" y="71" width="1" height="6" fill="#0f172a"/><rect x="1059" y="71" width="1" height="6" fill="#0f172a"/><rect x="1073" y="71" width="1" height="6" fill="#0f172a"/><rect x="236" y="162" width="15.5" height="1" fill="#e2e4ea"/><text transform="translate(239.1,167.20) rotate(90)" font-size="9.6" textLength="3.9" lengthAdjust="spacingAndGlyphs" fill="#0f172a" stroke="#0f172a" stroke-width="0.35">0</text><rect x="245" y="176" width="6.3" height="1" fill="#0f172a"/><rect x="245" y="189" width="6.3" height="1" fill="#0f172a"/><rect x="245" y="203" width="6.3" height="1" fill="#0f172a"/><rect x="245" y="216" width="6.3" height="1" fill="#0f172a"/><rect x="245" y="230" width="6.3" height="1" fill="#0f172a"/><rect x="245" y="243" width="6.3" height="1" fill="#0f172a"/><rect x="245" y="257" width="6.3" height="1" fill="#0f172a"/><rect x="245" y="270" width="6.3" height="1" fill="#0f172a"/><rect x="245" y="284" width="6.3" height="1" fill="#0f172a"/><rect x="236" y="297" width="15.5" height="1" fill="#e2e4ea"/><text transform="translate(239.1,302.20) rotate(90)" font-size="9.6" textLength="3.9" lengthAdjust="spacingAndGlyphs" fill="#0f172a" stroke="#0f172a" stroke-width="0.35">5</text><rect x="245" y="311" width="6.3" height="1" fill="#0f172a"/><rect x="245" y="324" width="6.3" height="1" fill="#0f172a"/><rect x="245" y="338" width="6.3" height="1" fill="#0f172a"/><rect x="245" y="351" width="6.3" height="1" fill="#0f172a"/><rect x="245" y="365" width="6.3" height="1" fill="#0f172a"/><rect x="245" y="378" width="6.3" height="1" fill="#0f172a"/><rect x="245" y="392" width="6.3" height="1" fill="#0f172a"/><rect x="245" y="405" width="6.3" height="1" fill="#0f172a"/><rect x="245" y="419" width="6.3" height="1" fill="#0f172a"/><rect x="236" y="432" width="15.5" height="1" fill="#e2e4ea"/><text transform="translate(239.1,437.20) rotate(90)" font-size="9.6" textLength="7.8" lengthAdjust="spacingAndGlyphs" fill="#0f172a" stroke="#0f172a" stroke-width="0.35">10</text><rect x="245" y="446" width="6.3" height="1" fill="#0f172a"/><rect x="245" y="459" width="6.3" height="1" fill="#0f172a"/><rect x="245" y="473" width="6.3" height="1" fill="#0f172a"/><rect x="245" y="486" width="6.3" height="1" fill="#0f172a"/><rect x="245" y="500" width="6.3" height="1" fill="#0f172a"/><rect x="245" y="513" width="6.3" height="1" fill="#0f172a"/><rect x="245" y="527" width="6.3" height="1" fill="#0f172a"/><rect x="245" y="540" width="6.3" height="1" fill="#0f172a"/><rect x="245" y="554" width="6.3" height="1" fill="#0f172a"/><rect x="236" y="567" width="15.5" height="1" fill="#e2e4ea"/><text transform="translate(239.1,572.20) rotate(90)" font-size="9.6" textLength="7.8" lengthAdjust="spacingAndGlyphs" fill="#0f172a" stroke="#0f172a" stroke-width="0.35">15</text><rect x="245" y="581" width="6.3" height="1" fill="#0f172a"/><rect x="245" y="594" width="6.3" height="1" fill="#0f172a"/><rect x="245" y="608" width="6.3" height="1" fill="#0f172a"/><rect x="245" y="621" width="6.3" height="1" fill="#0f172a"/><rect x="245" y="635" width="6.3" height="1" fill="#0f172a"/><rect x="245" y="648" width="6.3" height="1" fill="#0f172a"/><rect x="245" y="662" width="6.3" height="1" fill="#0f172a"/><rect x="245" y="675" width="6.3" height="1" fill="#0f172a"/><rect x="245" y="689" width="6.3" height="1" fill="#0f172a"/><rect x="236" y="702" width="15.5" height="1" fill="#e2e4ea"/><text transform="translate(239.1,707.20) rotate(90)" font-size="9.6" textLength="7.8" lengthAdjust="spacingAndGlyphs" fill="#0f172a" stroke="#0f172a" stroke-width="0.35">20</text><rect x="245" y="716" width="6.3" height="1" fill="#0f172a"/><rect x="245" y="729" width="6.3" height="1" fill="#0f172a"/></svg>
<div style="left:256.3px;top:82.2px;width:165.5px;height:27.3px;box-sizing:border-box;border:1px solid #e5e7eb;border-radius:5px;background:#fff"></div>
<div style="left:256.3px;top:118.3px;width:165.5px;height:144.9px;box-sizing:border-box;border:1px solid #e5e7eb;border-radius:5px;background:#fff"></div>
<div style="left:256.3px;top:268.5px;width:165.5px;height:99.3px;box-sizing:border-box;border:1px solid #e5e7eb;border-radius:5px;background:#fff"></div>
<div style="left:265px;top:87px;width:17.6px;height:17.6px;background:#0f172a;border-radius:3px"></div><svg style="left:265px;top:87px" width="17.6" height="17.6" viewBox="0 0 18 18"><path d="M4.6 9.4 L7.7 12.3 L13.4 5.9" fill="none" stroke="#fff" stroke-width="2" stroke-linecap="round" stroke-linejoin="round"/></svg>
<div style="left:265px;top:123.3px;width:17.6px;height:17.6px;background:#0f172a;border-radius:3px"></div><svg style="left:265px;top:123.3px" width="17.6" height="17.6" viewBox="0 0 18 18"><path d="M4.6 9.4 L7.7 12.3 L13.4 5.9" fill="none" stroke="#fff" stroke-width="2" stroke-linecap="round" stroke-linejoin="round"/></svg>
<div style="left:265.8px;top:155.5px;width:10.2px;height:9.7px;background:#22c55e"></div>
<div style="left:265.8px;top:173.5px;width:10.2px;height:9.7px;background:#facc15"></div>
<div style="left:265.8px;top:191.5px;width:10.2px;height:9.7px;background:#ef4444"></div>
<div style="left:265.8px;top:209.5px;width:10.2px;height:9.7px;background:#000"></div>
<div style="left:265.8px;top:227.5px;width:10.2px;height:9.7px;background:#000"></div>
<div style="left:265.8px;top:245.5px;width:10.2px;height:9.7px;background:#2563eb"></div>
<span class="t" style="left:255.0px;transform-origin:0 0;top:34.8px;font-size:14.8px;color:#0f172a;transform:scaleX(0.797)">22 x 24</span>
<span class="t" style="left:516.7px;transform-origin:0 0;top:34.8px;font-size:15.79px;color:#0f172a;transform:scaleX(0.706)">Image Margin</span>
<span class="t" style="left:598.3px;transform-origin:0 0;top:34.8px;font-size:15.79px;color:#0f172a;transform:scaleX(0.715)">0.5</span>
<span class="t" style="left:661.7px;transform-origin:0 0;top:34.8px;font-size:15.79px;color:#0f172a;transform:scaleX(0.773)">in</span>
<span class="t" style="left:291.2px;transform-origin:0 0;top:89.4px;font-size:13.68px;color:#0f172a;transform:scaleX(0.694)">Show Overlapping Lines</span>
<span class="t" style="left:291.2px;transform-origin:0 0;top:125.0px;font-size:13.68px;color:#0f172a;transform:scaleX(0.691)">Show Resolution Lines</span>
<span class="t" style="left:281.2px;transform-origin:0 0;top:153.8px;font-size:12.41px;color:#0f172a;transform:scaleX(0.785)">Optimal Resolution &gt;= 300 dpi</span>
<span class="t" style="left:281.2px;transform-origin:0 0;top:171.8px;font-size:12.41px;color:#0f172a;transform:scaleX(0.769)">Good Resolution &gt;= 250 dpi</span>
<span class="t" style="left:281.2px;transform-origin:0 0;top:189.8px;font-size:12.41px;color:#0f172a;transform:scaleX(0.778)">Bad Resolution &gt;= 200 dpi</span>
<span class="t" style="left:281.2px;transform-origin:0 0;top:207.8px;font-size:12.41px;color:#0f172a;transform:scaleX(0.796)">Terrible Resolution &lt; 200 dpi</span>
<span class="t" style="left:281.2px;transform-origin:0 0;top:225.8px;font-size:12.41px;color:#0f172a;transform:scaleX(0.783)">Minimum Resolution = 72 dpi</span>
<span class="t" style="left:281.2px;transform-origin:0 0;top:243.8px;font-size:12.41px;color:#0f172a;transform:scaleX(0.770)">Overlapping images</span>
<span class="t" style="left:265.3px;transform-origin:0 0;top:275.6px;font-size:12.97px;color:#0f172a;transform:scaleX(0.772)">Left</span>
<span class="t" style="left:345.3px;transform-origin:0 0;top:275.6px;font-size:12.97px;color:#0f172a;transform:scaleX(0.780)">0.34 in</span>
<span class="t" style="left:265.3px;transform-origin:0 0;top:293.6px;font-size:12.97px;color:#0f172a;transform:scaleX(0.679)">Top</span>
<span class="t" style="left:345.3px;transform-origin:0 0;top:293.6px;font-size:12.97px;color:#0f172a;transform:scaleX(0.793)">0.20 in</span>
<span class="t" style="left:265.3px;transform-origin:0 0;top:311.6px;font-size:12.97px;color:#0f172a;transform:scaleX(0.754)">Width</span>
<span class="t" style="left:345.3px;transform-origin:0 0;top:311.6px;font-size:12.97px;color:#0f172a;transform:scaleX(0.778)">10.00 in</span>
<span class="t" style="left:265.3px;transform-origin:0 0;top:329.6px;font-size:12.97px;color:#0f172a;transform:scaleX(0.757)">Height</span>
<span class="t" style="left:345.3px;transform-origin:0 0;top:329.6px;font-size:12.97px;color:#0f172a;transform:scaleX(0.746)">11.40 in</span>
<span class="t" style="left:265.3px;transform-origin:0 0;top:347.6px;font-size:12.97px;color:#0f172a;transform:scaleX(0.734)">Resolution</span>
<span class="t" style="left:345.3px;transform-origin:0 0;top:347.6px;font-size:12.97px;color:#0f172a;transform:scaleX(0.792)">300 dpi</span>
<span class="t" style="right:919.7px;transform-origin:100% 0;top:42.1px;font-size:14.94px;color:#1e293b;transform:scaleX(0.765)">Drag &amp; drop a file here, or click to</span>
<span class="t b" style="left:47.0px;transform-origin:0 0;top:74.3px;font-size:16.21px;font-weight:700;color:#fff;transform:scaleX(0.653)">Upload Image(s)</span>
<span class="t" style="right:923.5px;transform-origin:100% 0;top:109.6px;font-size:12.27px;color:#a5a6bd;transform:scaleX(0.755)">Upload images larger than 300 x 300px.</span>
<span class="t" style="right:896.0px;transform-origin:100% 0;top:129.6px;font-size:12.27px;color:#a5a6bd;transform:scaleX(0.718)">Supported formats: png, jpg, jpeg, svg, psd, ai, eps, pdf</span>
<span class="t b" style="left:60.3px;transform-origin:0 0;top:215.8px;font-size:13.82px;font-weight:700;color:#fff;transform:scaleX(0.741)">4</span>
<span class="t b" style="left:48.8px;transform-origin:0 0;top:256.9px;font-size:14.94px;font-weight:700;color:#fff;transform:scaleX(0.712)">Edit Image</span>
<span class="t" style="left:64.4px;transform-origin:0 0;top:299.1px;font-size:14.94px;color:#0f172a;transform:scaleX(0.802)">10.00</span>
<span class="t" style="left:213.2px;transform-origin:0 0;top:299.1px;font-size:14.94px;color:#0f172a;transform:scaleX(0.756)">in</span>
<span class="t" style="left:64.4px;transform-origin:0 0;top:337.4px;font-size:14.94px;color:#0f172a;transform:scaleX(0.747)">11.40</span>
<span class="t" style="left:213.2px;transform-origin:0 0;top:337.4px;font-size:14.94px;color:#0f172a;transform:scaleX(0.756)">in</span>
<span class="t" style="left:64.4px;transform-origin:0 0;top:375.1px;font-size:14.94px;color:#0f172a;transform:scaleX(0.825)">0.88</span>
<span class="t" style="right:1078.8px;transform-origin:100% 0;top:423.0px;font-size:13.53px;color:#1e3a8a;transform:scaleX(0.637)">Copies:</span>
<span class="t" style="left:50.0px;transform-origin:0 0;top:422.4px;font-size:14.94px;color:#0f172a;transform:scaleX(0.457)">1</span>
<span class="t" style="left:50.0px;transform-origin:0 0;top:460.1px;font-size:14.94px;color:#0f172a;transform:scaleX(0.771)">0.5</span>
<span class="t b" style="right:1047.2px;transform-origin:100% 0;top:498.5px;font-size:13.53px;font-weight:700;color:#fff;transform:scaleX(0.703)">Fill Sheet</span>
<span class="t b" style="left:113.7px;transform-origin:0 0;top:498.5px;font-size:13.53px;font-weight:700;color:#fff;transform:scaleX(0.678)">Duplicate Image</span>
<span class="t" style="right:1066.3px;transform-origin:100% 0;top:551.2px;font-size:12.97px;color:#1e293b;transform:scaleX(0.582)">Background:</span>
<span class="t" style="right:1067.7px;transform-origin:100% 0;top:623.6px;font-size:12.97px;color:#1e293b;transform:scaleX(0.738)">Color:</span>
<span class="t" style="left:9.3px;transform-origin:0 0;top:691.1px;font-size:14.38px;color:#0f172a;transform:scaleX(0.838)">0</span>
<div style="left:0px;top:0px;width:1081px;height:31px;background:#fff"></div>
</div></body></html>
